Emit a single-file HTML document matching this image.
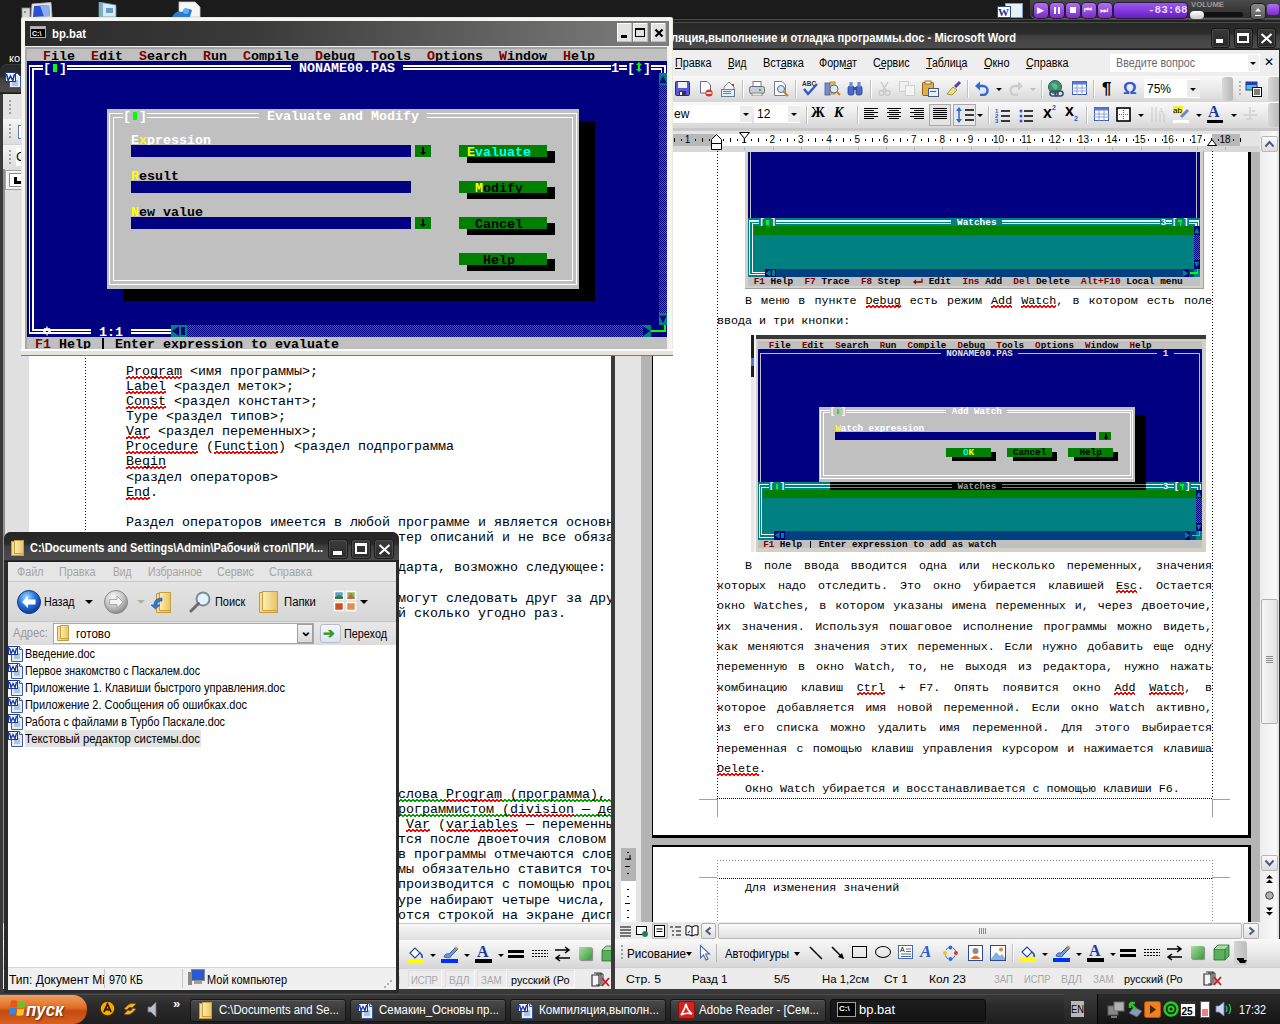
<!DOCTYPE html><html><head><meta charset="utf-8"><style>*{margin:0;padding:0}html,body{width:1280px;height:1024px;overflow:hidden;background:#1b1b1b}
div{position:absolute}
.w,.g{background-repeat:repeat-x;background-size:4px 3px;background-position:0 100%}
.w{background-image:linear-gradient(135deg,transparent 0 40%,#ff0000 40% 60%,transparent 60%),linear-gradient(45deg,transparent 0 40%,#ff0000 40% 60%,transparent 60%);background-size:4px 3px,4px 3px;background-position:0 100%,2px 100%}
.g{background-image:linear-gradient(135deg,transparent 0 40%,#00a000 40% 60%,transparent 60%),linear-gradient(45deg,transparent 0 40%,#00a000 40% 60%,transparent 60%);background-size:4px 3px,4px 3px;background-position:0 100%,2px 100%}
</style></head><body><div style="left:0px;top:0px;width:1280px;height:1024px;background:#1b1b1b;"></div>
<div style="left:9px;top:52px;color:#fff;font:normal 11px/13px 'Liberation Sans',sans-serif;white-space:pre;">ко</div>
<div style="left:0px;top:64px;width:640px;height:931px;background:#3a3a3a;border-radius:7px 7px 0 0"></div>
<div style="left:0px;top:65px;width:640px;height:29px;background:linear-gradient(#282828,#2b2b2b 38%,#3e3e3e 48%,#474747 70%,#4a4a4a 92%,#1e1e1e 96%);border-radius:7px 7px 0 0"></div>
<div style="left:5px;top:71px;width:17px;height:17px"><svg width="17" height="17" style="display:block"><path d="M4.5 2.5 H12.5 L15.5 5.5 V16.5 H4.5Z" fill="#e4eefa" stroke="#3a5aa8"/><path d="M7 10H13M7 12H13M7 14H13" stroke="#7a9ad0"/><rect x="0.5" y="1.5" width="10" height="9" fill="#fff" stroke="#1a3aa0"/><path d="M1.5 3 L3.2 9.5 L5.5 5 L7.8 9.5 L9.5 3" fill="none" stroke="#1a3aa0" stroke-width="1.6"/></svg></div>
<div style="left:3px;top:94px;width:637px;height:25px;background:#e4e4e4;"></div>
<div style="left:3px;top:119px;width:637px;height:25px;background:linear-gradient(#f6f6f6,#dcdcdc);"></div>
<div style="left:3px;top:144px;width:637px;height:25px;background:linear-gradient(#f6f6f6,#dcdcdc);"></div>
<div style="left:3px;top:144px;width:637px;height:1px;background:#d0d0d0;"></div>
<div style="left:9px;top:100px;width:2px;height:2px;background:#a0a0a0;"></div>
<div style="left:9px;top:104px;width:2px;height:2px;background:#a0a0a0;"></div>
<div style="left:9px;top:108px;width:2px;height:2px;background:#a0a0a0;"></div>
<div style="left:9px;top:112px;width:2px;height:2px;background:#a0a0a0;"></div>
<div style="left:9px;top:124px;width:2px;height:2px;background:#a0a0a0;"></div>
<div style="left:9px;top:128px;width:2px;height:2px;background:#a0a0a0;"></div>
<div style="left:9px;top:132px;width:2px;height:2px;background:#a0a0a0;"></div>
<div style="left:9px;top:136px;width:2px;height:2px;background:#a0a0a0;"></div>
<div style="left:9px;top:150px;width:2px;height:2px;background:#a0a0a0;"></div>
<div style="left:9px;top:154px;width:2px;height:2px;background:#a0a0a0;"></div>
<div style="left:9px;top:158px;width:2px;height:2px;background:#a0a0a0;"></div>
<div style="left:9px;top:162px;width:2px;height:2px;background:#a0a0a0;"></div>
<div style="left:18px;top:125px;width:6px;height:14px;background:#fff;border:1px solid #5a7ab0;box-sizing:border-box"></div>
<div style="left:16px;top:148px;width:14px;height:18px;background:#fff;"></div>
<div style="left:16px;top:149px;color:#000;font:normal 13px/16px 'Liberation Sans',sans-serif;white-space:pre;">С</div>
<div style="left:3px;top:169px;width:637px;height:186px;background:#dcdcdc;"></div>
<div style="left:3px;top:169px;width:2px;height:754px;background:#909090;"></div>
<div style="left:5px;top:169px;width:24px;height:754px;background:#e0e0e0;"></div>
<div style="left:5px;top:170px;width:20px;height:20px;background:#f0f0f0;border:1px solid #a0a0a0;box-sizing:border-box;box-shadow:inset 1px 1px #fff"></div>
<div style="left:9px;top:173px;width:14px;height:14px;background:#fff;border:1px solid #8a8a8a;box-sizing:border-box"></div>
<div style="left:14px;top:177px;width:3px;height:7px;background:#000;"></div>
<div style="left:14px;top:181px;width:7px;height:3px;background:#000;"></div>
<div style="left:29px;top:169px;width:582px;height:754px;background:#ffffff;"></div>
<div style="left:85px;top:355px;width:1px;height:568px;background:repeating-linear-gradient(#000 0 1px,transparent 1px 3px);"></div>
<div style="left:126px;top:363.5px;color:#000;font:normal 13.33px/15px 'Liberation Mono',monospace;white-space:pre"><span class="w">Program</span> &lt;имя программы&gt;;</div>
<div style="left:126px;top:378.65px;color:#000;font:normal 13.33px/15px 'Liberation Mono',monospace;white-space:pre"><span class="w">Label</span> &lt;раздел меток&gt;;</div>
<div style="left:126px;top:393.8px;color:#000;font:normal 13.33px/15px 'Liberation Mono',monospace;white-space:pre"><span class="w">Const</span> &lt;раздел констант&gt;;</div>
<div style="left:126px;top:408.95px;color:#000;font:normal 13.33px/15px 'Liberation Mono',monospace;white-space:pre">Type &lt;раздел типов&gt;;</div>
<div style="left:126px;top:424.1px;color:#000;font:normal 13.33px/15px 'Liberation Mono',monospace;white-space:pre"><span class="w">Var</span> &lt;раздел переменных&gt;;</div>
<div style="left:126px;top:439.25px;color:#000;font:normal 13.33px/15px 'Liberation Mono',monospace;white-space:pre"><span class="w">Procedure</span> (<span class="w">Function</span>) &lt;раздел подпрограмма</div>
<div style="left:126px;top:454.4px;color:#000;font:normal 13.33px/15px 'Liberation Mono',monospace;white-space:pre"><span class="w">Begin</span></div>
<div style="left:126px;top:469.55px;color:#000;font:normal 13.33px/15px 'Liberation Mono',monospace;white-space:pre">&lt;раздел операторов&gt;</div>
<div style="left:126px;top:484.7px;color:#000;font:normal 13.33px/15px 'Liberation Mono',monospace;white-space:pre"><span class="w">End</span>.</div>
<div style="left:126px;top:515.0px;color:#000;font:normal 13.33px/15px 'Liberation Mono',monospace;white-space:pre">Раздел операторов имеется в любой программе и является основным</div>
<div style="left:398px;top:530.15px;color:#000;font:normal 13.33px/15px 'Liberation Mono',monospace;white-space:pre">тер описаний и не все обязательны</div>
<div style="left:398px;top:560.45px;color:#000;font:normal 13.33px/15px 'Liberation Mono',monospace;white-space:pre">дарта, возможно следующее:</div>
<div style="left:398px;top:590.75px;color:#000;font:normal 13.33px/15px 'Liberation Mono',monospace;white-space:pre">могут следовать друг за другом</div>
<div style="left:398px;top:605.9px;color:#000;font:normal 13.33px/15px 'Liberation Mono',monospace;white-space:pre">й сколько угодно раз.</div>
<div style="left:398px;top:786.5px;color:#000;font:normal 13.33px/15px 'Liberation Mono',monospace;white-space:pre"><span class="g">слова <span class="w">Program</span> (программа), </span></div>
<div style="left:398px;top:801.65px;color:#000;font:normal 13.33px/15px 'Liberation Mono',monospace;white-space:pre"><span class="g">рограммистом (<span class="w">division</span> — деление)</span></div>
<div style="left:398px;top:816.8px;color:#000;font:normal 13.33px/15px 'Liberation Mono',monospace;white-space:pre"> <span class="w">Var</span> (<span class="w">variables</span> — переменные)</div>
<div style="left:398px;top:831.95px;color:#000;font:normal 13.33px/15px 'Liberation Mono',monospace;white-space:pre">тся после двоеточия словом </div>
<div style="left:398px;top:847.1px;color:#000;font:normal 13.33px/15px 'Liberation Mono',monospace;white-space:pre">в программы отмечаются слова</div>
<div style="left:398px;top:862.25px;color:#000;font:normal 13.33px/15px 'Liberation Mono',monospace;white-space:pre">мы обязательно ставится точка</div>
<div style="left:398px;top:877.4px;color:#000;font:normal 13.33px/15px 'Liberation Mono',monospace;white-space:pre">производится с помощью процедур</div>
<div style="left:398px;top:892.55px;color:#000;font:normal 13.33px/15px 'Liberation Mono',monospace;white-space:pre">уре набирают четыре числа, </div>
<div style="left:398px;top:907.7px;color:#000;font:normal 13.33px/15px 'Liberation Mono',monospace;white-space:pre">отся строкой на экране дисплея</div>
<div style="left:3px;top:923px;width:637px;height:17px;background:linear-gradient(#fafafa,#e0e0e0);"></div>
<div style="left:3px;top:923px;width:637px;height:1px;background:#c8c8c8;"></div>
<div style="left:3px;top:940px;width:637px;height:28px;background:linear-gradient(#f9f9f9,#e6e6e6 60%,#d6d6d6);"></div>
<div style="left:407px;top:945px;width:17px;height:19px"><svg width="17" height="19" style="display:block"><path d="M3 8 L8 3 L13 8 L8 13Z" fill="#fff" stroke="#2a4aa0" stroke-width="1.2"/><path d="M13 8 Q16 10 15 13" fill="none" stroke="#2a4aa0" stroke-width="1.5"/><rect x="0" y="14" width="17" height="4" fill="#ffff00"/></svg></div>
<div style="left:441px;top:945px;width:18px;height:19px"><svg width="18" height="19" style="display:block"><path d="M3 12 Q4 8 8 9 L15 2 L17 4 L10 11 Q10 14 3 12Z" fill="#6a9ad8" stroke="#2a4aa0" stroke-width=".8"/><path d="M14 2 L17 4" stroke="#d0a030" stroke-width="2"/><rect x="0" y="14" width="17" height="4" fill="#0030ff"/></svg></div>
<div style="left:477px;top:943px;color:#1a3a9a;font:bold 16px/18px 'Liberation Serif',serif;white-space:pre;">A</div>
<div style="left:475px;top:959px;width:17px;height:4px;background:#000;"></div>
<div style="left:430px;top:954px;width:0px;height:0px;background:transparent;border-left:3px solid transparent;border-right:3px solid transparent;border-top:3px solid #000"></div>
<div style="left:464px;top:954px;width:0px;height:0px;background:transparent;border-left:3px solid transparent;border-right:3px solid transparent;border-top:3px solid #000"></div>
<div style="left:498px;top:954px;width:0px;height:0px;background:transparent;border-left:3px solid transparent;border-right:3px solid transparent;border-top:3px solid #000"></div>
<div style="left:508px;top:950px;width:16px;height:2.5px;background:#000;"></div>
<div style="left:508px;top:955px;width:16px;height:3px;background:#000;"></div>
<div style="left:532px;top:950px;width:16px;height:1px;background:repeating-linear-gradient(90deg,#000 0 2px,transparent 2px 3px);"></div>
<div style="left:532px;top:953px;width:16px;height:1px;background:repeating-linear-gradient(90deg,#000 0 2px,transparent 2px 3px);"></div>
<div style="left:532px;top:956px;width:16px;height:1px;background:repeating-linear-gradient(90deg,#000 0 2px,transparent 2px 3px);"></div>
<div style="left:554px;top:946px;width:17px;height:16px"><svg width="17" height="16" style="display:block"><path d="M1 4H15 M11 1 L15 4 L11 7 M16 12H2 M6 9 L2 12 L6 15" fill="none" stroke="#000" stroke-width="1.5"/></svg></div>
<div style="left:579px;top:947px;width:13px;height:13px;background:linear-gradient(135deg,#a8dca8,#3a9a3a);box-shadow:1px 1px 1px #888;border-radius:1px"></div>
<div style="left:601px;top:945px;width:17px;height:17px"><svg width="17" height="17" style="display:block"><path d="M1 5 L5 1 H16 V12 L12 16 H1Z" fill="#5ab05a" stroke="#2a6a2a" stroke-width=".8"/><path d="M1 5 H12 V16 M12 5 L16 1" fill="none" stroke="#2a6a2a" stroke-width=".8"/><path d="M1.5 5 L5 1.5 H15.5 L12 5Z" fill="#a8dca8"/></svg></div>
<div style="left:3px;top:968px;width:637px;height:21px;background:#ececec;"></div>
<div style="left:3px;top:968px;width:637px;height:1px;background:#d4d4d4;"></div>
<div style="left:381px;top:973px;color:#a8a8a8;font:normal 11.5px/14px 'Liberation Sans',sans-serif;white-space:pre;transform-origin:0 0;transform:scaleX(0.8346);">ЗАП</div>
<div style="left:411px;top:973px;color:#a8a8a8;font:normal 11.5px/14px 'Liberation Sans',sans-serif;white-space:pre;transform-origin:0 0;transform:scaleX(0.8304);">ИСПР</div>
<div style="left:448.5px;top:973px;color:#a8a8a8;font:normal 11.5px/14px 'Liberation Sans',sans-serif;white-space:pre;transform-origin:0 0;transform:scaleX(0.9005);">ВДЛ</div>
<div style="left:480.5px;top:973px;color:#a8a8a8;font:normal 11.5px/14px 'Liberation Sans',sans-serif;white-space:pre;transform-origin:0 0;transform:scaleX(0.8470);">ЗАМ</div>
<div style="left:511px;top:973px;color:#000;font:normal 11.5px/14px 'Liberation Sans',sans-serif;white-space:pre;transform-origin:0 0;transform:scaleX(0.9457);">русский (Ро</div>
<div style="left:408px;top:970px;width:34px;height:18px;background:transparent;box-shadow:inset -1px -1px #f8f8f8,inset 1px 1px #e0e0e0"></div>
<div style="left:445px;top:970px;width:30px;height:18px;background:transparent;box-shadow:inset -1px -1px #f8f8f8,inset 1px 1px #e0e0e0"></div>
<div style="left:477px;top:970px;width:30px;height:18px;background:transparent;box-shadow:inset -1px -1px #f8f8f8,inset 1px 1px #e0e0e0"></div>
<div style="left:507px;top:970px;width:68px;height:18px;background:transparent;box-shadow:inset -1px -1px #f8f8f8,inset 1px 1px #e0e0e0"></div>
<div style="left:591px;top:972px;width:19px;height:16px"><svg width="19" height="16" style="display:block"><path d="M1 3 H8 V14 H1Z M3 1 H10 V12" fill="#f4f4f4" stroke="#333" stroke-width="1.2"/><path d="M5 2 H12 V13 H5" fill="none" stroke="#333" stroke-width="1"/><path d="M11 6 L18 14 M18 6 L11 14" stroke="#c02020" stroke-width="1.8"/></svg></div>
<div style="left:0px;top:989px;width:640px;height:6px;background:#3a3a3a;"></div>
<div style="left:611px;top:19px;width:669px;height:976px;background:#3a3a3a;border-radius:7px 7px 0 0"></div>
<div style="left:611px;top:19px;width:669px;height:4px;background:#222;border-radius:7px 7px 0 0"></div>
<div style="left:611px;top:19px;width:669px;height:1px;background:#4a4a4a;"></div>
<div style="left:611px;top:22px;width:669px;height:1px;background:#4a4a4a;"></div>
<div style="left:611px;top:23px;width:669px;height:27px;background:linear-gradient(#282828,#2b2b2b 38%,#3e3e3e 48%,#474747 70%,#4a4a4a 92%,#1e1e1e 96%);"></div>
<div style="left:671px;top:30px;color:#fff;font:bold 13px/16px 'Liberation Sans',sans-serif;white-space:pre;transform-origin:0 0;transform:scaleX(0.8579);">ляция,выполнение и отладка программы.doc - Microsoft Word</div>
<div style="left:1211px;top:28px;width:19px;height:20px;background:linear-gradient(#383838,#282828);border:1px solid #181818;border-radius:3px;box-sizing:border-box;box-shadow:inset 0 0 0 1px #484848"></div>
<div style="left:1234px;top:28px;width:19px;height:20px;background:linear-gradient(#383838,#282828);border:1px solid #181818;border-radius:3px;box-sizing:border-box;box-shadow:inset 0 0 0 1px #484848"></div>
<div style="left:1257px;top:28px;width:19px;height:20px;background:linear-gradient(#383838,#282828);border:1px solid #181818;border-radius:3px;box-sizing:border-box;box-shadow:inset 0 0 0 1px #484848"></div>
<div style="left:1216px;top:39px;width:7px;height:4px;background:#fff;"></div>
<div style="left:1237px;top:33px;width:12px;height:10px;background:transparent;border:2px solid #fff;border-top-width:3px;box-sizing:border-box"></div>
<div style="left:1260px;top:33px;width:13px;height:11px"><svg width="13" height="11" style="display:block"><path d="M1.5 1 L11.5 10 M11.5 1 L1.5 10" stroke="#fff" stroke-width="2"/></svg></div>
<div style="left:615px;top:50px;width:665px;height:26px;background:#eeeeee;"></div>
<div style="left:675px;top:56px;color:#000;font:normal 12px/14px 'Liberation Sans',sans-serif;white-space:pre;transform-origin:0 0;transform:scaleX(0.9027);">Правка</div>
<div style="left:727.6px;top:56px;color:#000;font:normal 12px/14px 'Liberation Sans',sans-serif;white-space:pre;transform-origin:0 0;transform:scaleX(0.8472);">Вид</div>
<div style="left:762.8px;top:56px;color:#000;font:normal 12px/14px 'Liberation Sans',sans-serif;white-space:pre;transform-origin:0 0;transform:scaleX(0.9146);">Вставка</div>
<div style="left:819px;top:56px;color:#000;font:normal 12px/14px 'Liberation Sans',sans-serif;white-space:pre;transform-origin:0 0;transform:scaleX(0.8912);">Формат</div>
<div style="left:873px;top:56px;color:#000;font:normal 12px/14px 'Liberation Sans',sans-serif;white-space:pre;transform-origin:0 0;transform:scaleX(0.8906);">Сервис</div>
<div style="left:926px;top:56px;color:#000;font:normal 12px/14px 'Liberation Sans',sans-serif;white-space:pre;transform-origin:0 0;transform:scaleX(0.8818);">Таблица</div>
<div style="left:983.5px;top:56px;color:#000;font:normal 12px/14px 'Liberation Sans',sans-serif;white-space:pre;transform-origin:0 0;transform:scaleX(0.9143);">Окно</div>
<div style="left:1025.8px;top:56px;color:#000;font:normal 12px/14px 'Liberation Sans',sans-serif;white-space:pre;transform-origin:0 0;transform:scaleX(0.9028);">Справка</div>
<div style="left:675.0px;top:68px;width:6.1px;height:1px;background:#000;"></div>
<div style="left:727.6px;top:68px;width:6.1px;height:1px;background:#000;"></div>
<div style="left:780.3px;top:68px;width:5.8px;height:1px;background:#000;"></div>
<div style="left:844.3px;top:68px;width:6.3px;height:1px;background:#000;"></div>
<div style="left:879.1px;top:68px;width:6.1px;height:1px;background:#000;"></div>
<div style="left:926.0px;top:68px;width:5.9px;height:1px;background:#000;"></div>
<div style="left:983.5px;top:68px;width:6.4px;height:1px;background:#000;"></div>
<div style="left:1025.8px;top:68px;width:6.1px;height:1px;background:#000;"></div>
<div style="left:1110px;top:54px;width:150px;height:18px;background:#fff;"></div>
<div style="left:1248px;top:55px;width:11px;height:16px;background:#f0f0f0;"></div>
<div style="left:1116px;top:56px;color:#6a6a6a;font:normal 12px/14px 'Liberation Sans',sans-serif;white-space:pre;transform-origin:0 0;transform:scaleX(0.8927);">Введите вопрос</div>
<div style="left:1250px;top:62px;width:0px;height:0px;background:transparent;border-left:3px solid transparent;border-right:3px solid transparent;border-top:3px solid #000"></div>
<div style="left:1264px;top:54px;color:#000;font:normal 12px/16px 'Liberation Sans',sans-serif;white-space:pre;">✕</div>
<div style="left:615px;top:76px;width:665px;height:26px;background:linear-gradient(#f9f9f9,#e6e6e6 60%,#d6d6d6);"></div>
<div style="left:615px;top:102px;width:665px;height:26px;background:linear-gradient(#f9f9f9,#e6e6e6 60%,#d6d6d6);"></div>
<div style="left:615px;top:128px;width:665px;height:3px;background:#c8c8c8;"></div>
<div style="left:675px;top:81px;width:15px;height:15px"><svg width="15" height="15" style="display:block"><rect x="0.5" y="0.5" width="14" height="14" rx="1" fill="#5a5ad8" stroke="#2a2a8a"/><rect x="3" y="1" width="9" height="6" fill="#f0f0ff"/><rect x="4" y="10" width="7" height="5" fill="#303050"/><rect x="5" y="11" width="2" height="3" fill="#fff"/></svg></div>
<div style="left:699px;top:81px;width:14px;height:16px"><svg width="14" height="16" style="display:block"><path d="M1.5 0.5H8L11.5 4V12H1.5Z" fill="#fff" stroke="#6a6a8a"/><circle cx="10" cy="12" r="3.6" fill="#e03020"/><rect x="7.5" y="11.2" width="5" height="1.6" fill="#fff"/></svg></div>
<div style="left:720px;top:81px;width:17px;height:16px"><svg width="17" height="16" style="display:block"><path d="M4 6 L9 1 L14 6 V10 H4Z" fill="#f4f4f8" stroke="#7a8aa0"/><rect x="1.5" y="8.5" width="13" height="7" fill="#e8eef8" stroke="#6a7a90"/><rect x="3" y="10" width="8" height="1" fill="#6a7a90"/><rect x="3" y="12" width="8" height="1" fill="#6a7a90"/><rect x="12" y="3" width="2" height="2" fill="#e03020"/></svg></div>
<div style="left:749px;top:81px;width:16px;height:15px"><svg width="16" height="15" style="display:block"><rect x="4" y="0.5" width="8" height="5" fill="#fff" stroke="#7a7a7a"/><rect x="0.5" y="5.5" width="15" height="7" rx="2" fill="#c8ccd4" stroke="#6a6e78"/><rect x="3" y="12" width="10" height="3" fill="#e8e8e8" stroke="#7a7a7a" stroke-width=".8"/><rect x="10" y="8" width="2" height="2" fill="#20c020"/></svg></div>
<div style="left:773px;top:81px;width:16px;height:16px"><svg width="16" height="16" style="display:block"><path d="M1.5 0.5H9L12.5 4V14.5H1.5Z" fill="#fff" stroke="#7a7a9a"/><circle cx="8" cy="8" r="3.5" fill="#cfe4f8" stroke="#5a6a80"/><path d="M10.5 10.5L15 15" stroke="#d08020" stroke-width="2.2"/></svg></div>
<div style="left:801px;top:80px;width:17px;height:16px"><svg width="17" height="16" style="display:block"><text x="1" y="6" font-family="Liberation Sans" font-weight="bold" font-size="6.5" fill="#303030">ABC</text><path d="M3 9 L7 14 L16 4" fill="none" stroke="#2a5ad8" stroke-width="2.4"/></svg></div>
<div style="left:824px;top:80px;width:17px;height:17px"><svg width="17" height="17" style="display:block"><rect x="1" y="3" width="5" height="12" fill="#7a8ad8" stroke="#4a5aa0" stroke-width=".8"/><rect x="6" y="2" width="5" height="12" fill="#e0c060" stroke="#a08030" stroke-width=".8"/><circle cx="10" cy="9" r="4" fill="#d8ecfa" stroke="#5a6a7a"/><path d="M12.5 11.5L16 15" stroke="#d08020" stroke-width="2"/></svg></div>
<div style="left:847px;top:81px;width:16px;height:15px"><svg width="16" height="15" style="display:block"><rect x="1" y="5" width="6" height="9" rx="2" fill="#4a6ac8" stroke="#2a3a88" stroke-width=".8"/><rect x="9" y="5" width="6" height="9" rx="2" fill="#4a6ac8" stroke="#2a3a88" stroke-width=".8"/><rect x="2.5" y="1" width="3" height="5" fill="#6a8ad8"/><rect x="10.5" y="1" width="3" height="5" fill="#6a8ad8"/><rect x="6" y="6" width="4" height="3" fill="#3a4a98"/></svg></div>
<div style="left:878px;top:81px;width:13px;height:15px"><svg width="13" height="15" style="display:block"><circle cx="3.5" cy="12" r="2.5" fill="none" stroke="#c8c8c8" stroke-width="1.3"/><circle cx="9.5" cy="12" r="2.5" fill="none" stroke="#c8c8c8" stroke-width="1.3"/><path d="M4.5 10 L10 1 M8.5 10 L3 1" stroke="#c4c4c4" stroke-width="1.3"/></svg></div>
<div style="left:899px;top:81px;width:16px;height:15px"><svg width="16" height="15" style="display:block"><rect x="0.5" y="0.5" width="9" height="10" fill="#f0f0f0" stroke="#cfcfcf"/><rect x="6.5" y="4.5" width="9" height="10" fill="#f4f4f4" stroke="#cfcfcf"/></svg></div>
<div style="left:922px;top:80px;width:17px;height:17px"><svg width="17" height="17" style="display:block"><rect x="0.5" y="2.5" width="11" height="13" rx="1" fill="#e0b040" stroke="#906010"/><rect x="3" y="1" width="6" height="3" fill="#f8f0d0" stroke="#806020" stroke-width=".8"/><rect x="6.5" y="8.5" width="10" height="8" fill="#e8eef8" stroke="#4a5a80"/><rect x="8" y="11" width="6" height="1" fill="#4a5a80"/></svg></div>
<div style="left:945px;top:80px;width:17px;height:16px"><svg width="17" height="16" style="display:block"><path d="M2 14 L8 7 L12 10 L7 15Z" fill="#f0e080" stroke="#8a7a20" stroke-width=".8"/><path d="M10 7 L15 2" stroke="#5a3ab0" stroke-width="3"/></svg></div>
<div style="left:975px;top:81px;width:14px;height:15px"><svg width="14" height="15" style="display:block"><path d="M4 5 H8 A4.5 4.5 0 0 1 8 14 H5" fill="none" stroke="#2a6ad8" stroke-width="2.4"/><path d="M0 5 L5 0.5 V9.5Z" fill="#2a6ad8"/></svg></div>
<div style="left:1009px;top:81px;width:14px;height:15px"><svg width="14" height="15" style="display:block"><path d="M10 5 H6 A4.5 4.5 0 0 0 6 14 H9" fill="none" stroke="#cccccc" stroke-width="2.4"/><path d="M14 5 L9 0.5 V9.5Z" fill="#cccccc"/></svg></div>
<div style="left:1047px;top:80px;width:18px;height:17px"><svg width="18" height="17" style="display:block"><circle cx="8" cy="7" r="6.5" fill="#3a9a4a" stroke="#2a5a8a"/><path d="M4 4 Q8 2 10 5 Q12 8 8 10" fill="#6ac0e0" opacity=".7"/><rect x="3" y="11" width="8" height="5" rx="2.5" fill="none" stroke="#3a4a7a" stroke-width="1.6"/><rect x="8" y="11" width="8" height="5" rx="2.5" fill="none" stroke="#3a4a7a" stroke-width="1.6"/></svg></div>
<div style="left:1072px;top:81px;width:15px;height:14px"><svg width="15" height="14" style="display:block"><rect x="0.5" y="0.5" width="14" height="13" fill="#fff" stroke="#3a5ab8"/><rect x="0.5" y="0.5" width="14" height="3" fill="#5a7ad8"/><path d="M0 7H15M0 10H15M5 3V14M10 3V14" stroke="#8aa0d8"/></svg></div>
<div style="left:1102px;top:80px;color:#000;font:bold 17px/18px 'Liberation Sans',sans-serif;white-space:pre;">¶</div>
<div style="left:1123px;top:79px;color:#2a5ad0;font:bold 17px/19px 'Liberation Sans',sans-serif;white-space:pre;">Ω</div>
<div style="left:742px;top:80px;width:1px;height:18px;background:#c0c0c0;"></div>
<div style="left:743px;top:80px;width:1px;height:18px;background:#fff;"></div>
<div style="left:795px;top:80px;width:1px;height:18px;background:#c0c0c0;"></div>
<div style="left:796px;top:80px;width:1px;height:18px;background:#fff;"></div>
<div style="left:870px;top:80px;width:1px;height:18px;background:#c0c0c0;"></div>
<div style="left:871px;top:80px;width:1px;height:18px;background:#fff;"></div>
<div style="left:967px;top:80px;width:1px;height:18px;background:#c0c0c0;"></div>
<div style="left:968px;top:80px;width:1px;height:18px;background:#fff;"></div>
<div style="left:1041px;top:80px;width:1px;height:18px;background:#c0c0c0;"></div>
<div style="left:1042px;top:80px;width:1px;height:18px;background:#fff;"></div>
<div style="left:1093px;top:80px;width:1px;height:18px;background:#c0c0c0;"></div>
<div style="left:1094px;top:80px;width:1px;height:18px;background:#fff;"></div>
<div style="left:1144px;top:79px;width:56px;height:19px;background:#fff;"></div>
<div style="left:1147px;top:82px;color:#000;font:normal 12px/14px 'Liberation Sans',sans-serif;white-space:pre;">75%</div>
<div style="left:1187px;top:80px;width:13px;height:17px;background:#ececec;"></div>
<div style="left:996px;top:88px;width:0px;height:0px;background:transparent;border-left:3px solid transparent;border-right:3px solid transparent;border-top:3px solid #000"></div>
<div style="left:1030px;top:88px;width:0px;height:0px;background:transparent;border-left:3px solid transparent;border-right:3px solid transparent;border-top:3px solid #c0c0c0"></div>
<div style="left:1190px;top:88px;width:0px;height:0px;background:transparent;border-left:3px solid transparent;border-right:3px solid transparent;border-top:3px solid #000"></div>
<div style="left:1222px;top:77px;width:11px;height:24px;background:linear-gradient(90deg,#d8d8d8,#b8b8b8);border-radius:3px"></div>
<div style="left:1236px;top:77px;width:44px;height:24px;background:linear-gradient(#f6f6f6,#e0e0e0);border-radius:4px 0 0 4px"></div>
<div style="left:1239px;top:81px;width:2px;height:2px;background:#b0b0b0;"></div>
<div style="left:1239px;top:85px;width:2px;height:2px;background:#b0b0b0;"></div>
<div style="left:1239px;top:89px;width:2px;height:2px;background:#b0b0b0;"></div>
<div style="left:1239px;top:93px;width:2px;height:2px;background:#b0b0b0;"></div>
<div style="left:1245px;top:81px;width:18px;height:16px"><svg width="18" height="16" style="display:block"><rect x="1" y="1" width="11" height="8" fill="#40c8e0" stroke="#2a3a8a"/><rect x="1" y="1" width="11" height="3" fill="#2a3ab0"/><rect x="7.5" y="6.5" width="9" height="9" fill="#fff" stroke="#000"/><path d="M9 9H15M9 11H15M9 13H15" stroke="#000"/></svg></div>
<div style="left:1268px;top:77px;width:12px;height:24px;background:linear-gradient(90deg,#d8d8d8,#b8b8b8);border-radius:3px 0 0 3px"></div>
<div style="left:672px;top:105px;width:80px;height:18px;background:#fff;"></div>
<div style="left:674px;top:107px;color:#000;font:normal 12px/14px 'Liberation Sans',sans-serif;white-space:pre;">ew</div>
<div style="left:740px;top:106px;width:12px;height:16px;background:#ececec;"></div>
<div style="left:754px;top:105px;width:46px;height:18px;background:#fff;"></div>
<div style="left:757px;top:107px;color:#000;font:normal 12px/14px 'Liberation Sans',sans-serif;white-space:pre;">12</div>
<div style="left:788px;top:106px;width:12px;height:16px;background:#ececec;"></div>
<div style="left:743px;top:113px;width:0px;height:0px;background:transparent;border-left:3px solid transparent;border-right:3px solid transparent;border-top:3px solid #000"></div>
<div style="left:791px;top:113px;width:0px;height:0px;background:transparent;border-left:3px solid transparent;border-right:3px solid transparent;border-top:3px solid #000"></div>
<div style="left:811px;top:105px;color:#000;font:bold 14px/16px 'Liberation Serif',serif;white-space:pre;">Ж</div>
<div style="left:834px;top:105px;color:#000;font:bold 14px/16px 'Liberation Serif',serif;white-space:pre;font-style:italic">К</div>
<div style="left:929px;top:104px;width:22px;height:22px;background:#e4e4e4;box-shadow:inset 0 0 0 1px #a8a8a8"></div>
<div style="left:953px;top:104px;width:23px;height:22px;background:#e8e8e8;box-shadow:inset 0 0 0 1px #a8a8a8"></div>
<div style="left:864px;top:108px;width:14px;height:1px;background:#000;"></div>
<div style="left:864px;top:110px;width:10px;height:1px;background:#000;"></div>
<div style="left:864px;top:112px;width:14px;height:1px;background:#000;"></div>
<div style="left:864px;top:114px;width:10px;height:1px;background:#000;"></div>
<div style="left:864px;top:116px;width:14px;height:1px;background:#000;"></div>
<div style="left:864px;top:118px;width:10px;height:1px;background:#000;"></div>
<div style="left:887px;top:108px;width:14px;height:1px;background:#000;"></div>
<div style="left:889px;top:110px;width:10px;height:1px;background:#000;"></div>
<div style="left:887px;top:112px;width:14px;height:1px;background:#000;"></div>
<div style="left:889px;top:114px;width:10px;height:1px;background:#000;"></div>
<div style="left:887px;top:116px;width:14px;height:1px;background:#000;"></div>
<div style="left:889px;top:118px;width:10px;height:1px;background:#000;"></div>
<div style="left:910px;top:108px;width:14px;height:1px;background:#000;"></div>
<div style="left:914px;top:110px;width:10px;height:1px;background:#000;"></div>
<div style="left:910px;top:112px;width:14px;height:1px;background:#000;"></div>
<div style="left:914px;top:114px;width:10px;height:1px;background:#000;"></div>
<div style="left:910px;top:116px;width:14px;height:1px;background:#000;"></div>
<div style="left:914px;top:118px;width:10px;height:1px;background:#000;"></div>
<div style="left:933px;top:108px;width:14px;height:1px;background:#000;"></div>
<div style="left:933px;top:110px;width:14px;height:1px;background:#000;"></div>
<div style="left:933px;top:112px;width:14px;height:1px;background:#000;"></div>
<div style="left:933px;top:114px;width:14px;height:1px;background:#000;"></div>
<div style="left:933px;top:116px;width:14px;height:1px;background:#000;"></div>
<div style="left:933px;top:118px;width:14px;height:1px;background:#000;"></div>
<div style="left:955px;top:106px;width:20px;height:18px"><svg width="20" height="18" style="display:block"><path d="M4 1 L7 5 H1Z M4 17 L7 13 H1Z" fill="#2a6ad8"/><path d="M4 4V14" stroke="#2a6ad8" stroke-width="1.5"/><path d="M10 4H19M10 9H19M10 14H19" stroke="#000" stroke-width="1.6"/></svg></div>
<div style="left:977px;top:114px;width:0px;height:0px;background:transparent;border-left:3px solid transparent;border-right:3px solid transparent;border-top:3px solid #000"></div>
<div style="left:995px;top:107px;width:16px;height:16px"><svg width="16" height="16" style="display:block"><text x="0" y="6" font-family="Liberation Sans" font-weight="bold" font-size="6" fill="#2a5ad0">1</text><text x="0" y="11" font-family="Liberation Sans" font-weight="bold" font-size="6" fill="#2a5ad0">2</text><text x="0" y="16" font-family="Liberation Sans" font-weight="bold" font-size="6" fill="#2a5ad0">3</text><path d="M6 4H15M6 9H15M6 14H15" stroke="#000" stroke-width="1.5"/></svg></div>
<div style="left:1019px;top:107px;width:14px;height:16px"><svg width="14" height="16" style="display:block"><circle cx="2" cy="4" r="1.5" fill="#2a5ad0"/><circle cx="2" cy="9" r="1.5" fill="#2a5ad0"/><circle cx="2" cy="14" r="1.5" fill="#2a5ad0"/><path d="M5 4H14M5 9H14M5 14H14" stroke="#000" stroke-width="1.5"/></svg></div>
<div style="left:1043px;top:104px;color:#000;font:bold 16px/18px 'Liberation Sans',sans-serif;white-space:pre;">x</div>
<div style="left:1052px;top:103px;color:#2a5ad0;font:bold 7px/9px 'Liberation Sans',sans-serif;white-space:pre;">2</div>
<div style="left:1065px;top:102px;color:#000;font:bold 16px/18px 'Liberation Sans',sans-serif;white-space:pre;">x</div>
<div style="left:1074px;top:114px;color:#2a5ad0;font:bold 7px/9px 'Liberation Sans',sans-serif;white-space:pre;">2</div>
<div style="left:1094px;top:107px;width:15px;height:14px"><svg width="15" height="14" style="display:block"><rect x="0.5" y="0.5" width="14" height="13" fill="#fff" stroke="#3a5ab8"/><rect x="0.5" y="0.5" width="14" height="3" fill="#5a7ad8"/><path d="M0 7H15M0 10H15M5 3V14M10 3V14" stroke="#8aa0d8"/></svg></div>
<div style="left:1116px;top:107px;width:15px;height:15px"><svg width="15" height="15" style="display:block"><rect x="1" y="1" width="13" height="13" fill="#fff" stroke="#000" stroke-width="1.6"/><path d="M7.5 3V12M3 7.5H12" stroke="#6a6a6a" stroke-dasharray="1 1"/></svg></div>
<div style="left:1138px;top:114px;width:0px;height:0px;background:transparent;border-left:3px solid transparent;border-right:3px solid transparent;border-top:3px solid #000"></div>
<div style="left:1150px;top:106px;width:16px;height:17px"><svg width="16" height="17" style="display:block"><path d="M2 1V16M6 1V16M10 8V16M14 8V16" stroke="#c8c8c8"/><text x="8" y="8" font-family="Liberation Serif" font-size="8" fill="#c8c8c8">A</text></svg></div>
<div style="left:1173px;top:106px;width:18px;height:18px"><svg width="18" height="18" style="display:block"><rect x="0" y="0" width="10" height="8" fill="#f0f040"/><text x="0" y="7" font-family="Liberation Sans" font-size="8" fill="#000">ab</text><path d="M8 11 L15 4" stroke="#6a8ad0" stroke-width="3"/><rect x="0" y="14" width="16" height="3" fill="#fff"/></svg></div>
<div style="left:1196px;top:114px;width:0px;height:0px;background:transparent;border-left:3px solid transparent;border-right:3px solid transparent;border-top:3px solid #000"></div>
<div style="left:1208px;top:103px;color:#1a3a9a;font:bold 16px/18px 'Liberation Serif',serif;white-space:pre;">A</div>
<div style="left:1207px;top:120px;width:16px;height:3px;background:#000;"></div>
<div style="left:1231px;top:114px;width:0px;height:0px;background:transparent;border-left:3px solid transparent;border-right:3px solid transparent;border-top:3px solid #000"></div>
<div style="left:1242px;top:106px;width:16px;height:16px"><svg width="16" height="16" style="display:block"><path d="M8 1V13M1 9H15M4 13H10M10 5H13" stroke="#d0d0d0" stroke-width="1.5"/></svg></div>
<div style="left:1268px;top:103px;width:12px;height:24px;background:linear-gradient(90deg,#d8d8d8,#b8b8b8);border-radius:3px 0 0 3px"></div>
<div style="left:806px;top:106px;width:1px;height:18px;background:#c0c0c0;"></div>
<div style="left:807px;top:106px;width:1px;height:18px;background:#fff;"></div>
<div style="left:857px;top:106px;width:1px;height:18px;background:#c0c0c0;"></div>
<div style="left:858px;top:106px;width:1px;height:18px;background:#fff;"></div>
<div style="left:988px;top:106px;width:1px;height:18px;background:#c0c0c0;"></div>
<div style="left:989px;top:106px;width:1px;height:18px;background:#fff;"></div>
<div style="left:1086px;top:106px;width:1px;height:18px;background:#c0c0c0;"></div>
<div style="left:1087px;top:106px;width:1px;height:18px;background:#fff;"></div>
<div style="left:615px;top:131px;width:645px;height:20px;background:#e4e4e4;"></div>
<div style="left:672px;top:134px;width:568px;height:12px;background:#fff;"></div>
<div style="left:672px;top:134px;width:43px;height:12px;background:#b8b8b8;"></div>
<div style="left:1212px;top:134px;width:28px;height:12px;background:#b8b8b8;"></div>
<div style="left:672px;top:146px;width:588px;height:6px;background:#d8d8d8;"></div>
<div style="left:684.7px;top:134px;color:#000;font:normal 10px/12px 'Liberation Sans',sans-serif;white-space:pre;">1</div>
<div style="left:741.3px;top:134px;color:#000;font:normal 10px/12px 'Liberation Sans',sans-serif;white-space:pre;">1</div>
<div style="left:769.6px;top:134px;color:#000;font:normal 10px/12px 'Liberation Sans',sans-serif;white-space:pre;">2</div>
<div style="left:797.9px;top:134px;color:#000;font:normal 10px/12px 'Liberation Sans',sans-serif;white-space:pre;">3</div>
<div style="left:826.2px;top:134px;color:#000;font:normal 10px/12px 'Liberation Sans',sans-serif;white-space:pre;">4</div>
<div style="left:854.5px;top:134px;color:#000;font:normal 10px/12px 'Liberation Sans',sans-serif;white-space:pre;">5</div>
<div style="left:882.8px;top:134px;color:#000;font:normal 10px/12px 'Liberation Sans',sans-serif;white-space:pre;">6</div>
<div style="left:911.1px;top:134px;color:#000;font:normal 10px/12px 'Liberation Sans',sans-serif;white-space:pre;">7</div>
<div style="left:939.4px;top:134px;color:#000;font:normal 10px/12px 'Liberation Sans',sans-serif;white-space:pre;">8</div>
<div style="left:967.7px;top:134px;color:#000;font:normal 10px/12px 'Liberation Sans',sans-serif;white-space:pre;">9</div>
<div style="left:993.0px;top:134px;color:#000;font:normal 10px/12px 'Liberation Sans',sans-serif;white-space:pre;">10</div>
<div style="left:1021.3px;top:134px;color:#000;font:normal 10px/12px 'Liberation Sans',sans-serif;white-space:pre;">11</div>
<div style="left:1049.6px;top:134px;color:#000;font:normal 10px/12px 'Liberation Sans',sans-serif;white-space:pre;">12</div>
<div style="left:1077.9px;top:134px;color:#000;font:normal 10px/12px 'Liberation Sans',sans-serif;white-space:pre;">13</div>
<div style="left:1106.2px;top:134px;color:#000;font:normal 10px/12px 'Liberation Sans',sans-serif;white-space:pre;">14</div>
<div style="left:1134.5px;top:134px;color:#000;font:normal 10px/12px 'Liberation Sans',sans-serif;white-space:pre;">15</div>
<div style="left:1162.8px;top:134px;color:#000;font:normal 10px/12px 'Liberation Sans',sans-serif;white-space:pre;">16</div>
<div style="left:1191.1px;top:134px;color:#000;font:normal 10px/12px 'Liberation Sans',sans-serif;white-space:pre;">17</div>
<div style="left:1219.4px;top:134px;color:#000;font:normal 10px/12px 'Liberation Sans',sans-serif;white-space:pre;">18</div>
<div style="left:673.5px;top:138px;width:1px;height:4px;background:#000;"></div>
<div style="left:680.6px;top:139px;width:1px;height:2px;background:#000;"></div>
<div style="left:694.8px;top:139px;width:1px;height:2px;background:#000;"></div>
<div style="left:701.9px;top:138px;width:1px;height:4px;background:#000;"></div>
<div style="left:708.9px;top:139px;width:1px;height:2px;background:#000;"></div>
<div style="left:723.1px;top:139px;width:1px;height:2px;background:#000;"></div>
<div style="left:730.1px;top:138px;width:1px;height:4px;background:#000;"></div>
<div style="left:737.2px;top:139px;width:1px;height:2px;background:#000;"></div>
<div style="left:751.4px;top:139px;width:1px;height:2px;background:#000;"></div>
<div style="left:758.4px;top:138px;width:1px;height:4px;background:#000;"></div>
<div style="left:765.5px;top:139px;width:1px;height:2px;background:#000;"></div>
<div style="left:779.7px;top:139px;width:1px;height:2px;background:#000;"></div>
<div style="left:786.8px;top:138px;width:1px;height:4px;background:#000;"></div>
<div style="left:793.8px;top:139px;width:1px;height:2px;background:#000;"></div>
<div style="left:808.0px;top:139px;width:1px;height:2px;background:#000;"></div>
<div style="left:815.0px;top:138px;width:1px;height:4px;background:#000;"></div>
<div style="left:822.1px;top:139px;width:1px;height:2px;background:#000;"></div>
<div style="left:836.3px;top:139px;width:1px;height:2px;background:#000;"></div>
<div style="left:843.4px;top:138px;width:1px;height:4px;background:#000;"></div>
<div style="left:850.4px;top:139px;width:1px;height:2px;background:#000;"></div>
<div style="left:864.6px;top:139px;width:1px;height:2px;background:#000;"></div>
<div style="left:871.6px;top:138px;width:1px;height:4px;background:#000;"></div>
<div style="left:878.7px;top:139px;width:1px;height:2px;background:#000;"></div>
<div style="left:892.9px;top:139px;width:1px;height:2px;background:#000;"></div>
<div style="left:899.9px;top:138px;width:1px;height:4px;background:#000;"></div>
<div style="left:907.0px;top:139px;width:1px;height:2px;background:#000;"></div>
<div style="left:921.2px;top:139px;width:1px;height:2px;background:#000;"></div>
<div style="left:928.2px;top:138px;width:1px;height:4px;background:#000;"></div>
<div style="left:935.3px;top:139px;width:1px;height:2px;background:#000;"></div>
<div style="left:949.5px;top:139px;width:1px;height:2px;background:#000;"></div>
<div style="left:956.5px;top:138px;width:1px;height:4px;background:#000;"></div>
<div style="left:963.6px;top:139px;width:1px;height:2px;background:#000;"></div>
<div style="left:977.8px;top:139px;width:1px;height:2px;background:#000;"></div>
<div style="left:984.9px;top:138px;width:1px;height:4px;background:#000;"></div>
<div style="left:991.9px;top:139px;width:1px;height:2px;background:#000;"></div>
<div style="left:1006.1px;top:139px;width:1px;height:2px;background:#000;"></div>
<div style="left:1013.1px;top:138px;width:1px;height:4px;background:#000;"></div>
<div style="left:1020.2px;top:139px;width:1px;height:2px;background:#000;"></div>
<div style="left:1034.4px;top:139px;width:1px;height:2px;background:#000;"></div>
<div style="left:1041.5px;top:138px;width:1px;height:4px;background:#000;"></div>
<div style="left:1048.5px;top:139px;width:1px;height:2px;background:#000;"></div>
<div style="left:1062.7px;top:139px;width:1px;height:2px;background:#000;"></div>
<div style="left:1069.8px;top:138px;width:1px;height:4px;background:#000;"></div>
<div style="left:1076.8px;top:139px;width:1px;height:2px;background:#000;"></div>
<div style="left:1091.0px;top:139px;width:1px;height:2px;background:#000;"></div>
<div style="left:1098.1px;top:138px;width:1px;height:4px;background:#000;"></div>
<div style="left:1105.1px;top:139px;width:1px;height:2px;background:#000;"></div>
<div style="left:1119.3px;top:139px;width:1px;height:2px;background:#000;"></div>
<div style="left:1126.4px;top:138px;width:1px;height:4px;background:#000;"></div>
<div style="left:1133.4px;top:139px;width:1px;height:2px;background:#000;"></div>
<div style="left:1147.6px;top:139px;width:1px;height:2px;background:#000;"></div>
<div style="left:1154.7px;top:138px;width:1px;height:4px;background:#000;"></div>
<div style="left:1161.7px;top:139px;width:1px;height:2px;background:#000;"></div>
<div style="left:1175.9px;top:139px;width:1px;height:2px;background:#000;"></div>
<div style="left:1183.0px;top:138px;width:1px;height:4px;background:#000;"></div>
<div style="left:1190.0px;top:139px;width:1px;height:2px;background:#000;"></div>
<div style="left:1204.2px;top:139px;width:1px;height:2px;background:#000;"></div>
<div style="left:1211.2px;top:138px;width:1px;height:4px;background:#000;"></div>
<div style="left:1218.3px;top:139px;width:1px;height:2px;background:#000;"></div>
<div style="left:1232.5px;top:139px;width:1px;height:2px;background:#000;"></div>
<div style="left:1239.6px;top:138px;width:1px;height:4px;background:#000;"></div>
<div style="left:744.3px;top:147px;width:1px;height:3px;background:#b8b8b8;"></div>
<div style="left:772.6px;top:147px;width:1px;height:3px;background:#b8b8b8;"></div>
<div style="left:800.9px;top:147px;width:1px;height:3px;background:#b8b8b8;"></div>
<div style="left:829.2px;top:147px;width:1px;height:3px;background:#b8b8b8;"></div>
<div style="left:857.5px;top:147px;width:1px;height:3px;background:#b8b8b8;"></div>
<div style="left:885.8px;top:147px;width:1px;height:3px;background:#b8b8b8;"></div>
<div style="left:914.1px;top:147px;width:1px;height:3px;background:#b8b8b8;"></div>
<div style="left:942.4px;top:147px;width:1px;height:3px;background:#b8b8b8;"></div>
<div style="left:970.7px;top:147px;width:1px;height:3px;background:#b8b8b8;"></div>
<div style="left:999.0px;top:147px;width:1px;height:3px;background:#b8b8b8;"></div>
<div style="left:1027.3px;top:147px;width:1px;height:3px;background:#b8b8b8;"></div>
<div style="left:1055.6px;top:147px;width:1px;height:3px;background:#b8b8b8;"></div>
<div style="left:1083.9px;top:147px;width:1px;height:3px;background:#b8b8b8;"></div>
<div style="left:1112.2px;top:147px;width:1px;height:3px;background:#b8b8b8;"></div>
<div style="left:1140.5px;top:147px;width:1px;height:3px;background:#b8b8b8;"></div>
<div style="left:1168.8px;top:147px;width:1px;height:3px;background:#b8b8b8;"></div>
<div style="left:1197.1px;top:147px;width:1px;height:3px;background:#b8b8b8;"></div>
<div style="left:1225.4px;top:147px;width:1px;height:3px;background:#b8b8b8;"></div>
<div style="left:710px;top:130px;width:13px;height:22px"><svg width="13" height="22" style="display:block"><path d="M1.5 9.5 L6.5 4.5 L11.5 9.5 V13.5 H1.5Z M1.5 13.5 H11.5 V19.5 H1.5Z" fill="#fff" stroke="#000"/></svg></div>
<div style="left:738px;top:131px;width:13px;height:13px"><svg width="13" height="13" style="display:block"><path d="M1.5 1.5 H11.5 L6.5 7.5 Z" fill="#fff" stroke="#000"/><path d="M6.5 7.5V12" stroke="#000"/></svg></div>
<div style="left:1206px;top:135px;width:12px;height:11px"><svg width="12" height="11" style="display:block"><path d="M1.5 10.5 L6 4.5 L10.5 10.5Z" fill="#fff" stroke="#000"/></svg></div>
<div style="left:1260px;top:131px;width:20px;height:20px;background:#ececec;"></div>
<div style="left:1262px;top:131px;width:16px;height:3px;background:#d0d0d0;border:1px solid #a0a0a0;box-sizing:border-box"></div>
<div style="left:615px;top:152px;width:645px;height:771px;background:#b4b4b4;"></div>
<div style="left:615px;top:151px;width:26px;height:772px;background:#e4e4e4;"></div>
<div style="left:621px;top:848px;width:15px;height:33px;background:#b4b4b4;"></div>
<div style="left:621px;top:881px;width:15px;height:41px;background:#fff;"></div>
<div style="left:627px;top:852px;width:2px;height:1px;background:#000;"></div>
<div style="left:627px;top:859px;width:2px;height:1px;background:#000;"></div>
<div style="left:627px;top:873px;width:2px;height:1px;background:#000;"></div>
<div style="left:627px;top:889px;width:2px;height:1px;background:#000;"></div>
<div style="left:627px;top:896px;width:2px;height:1px;background:#000;"></div>
<div style="left:627px;top:910px;width:2px;height:1px;background:#000;"></div>
<div style="left:627px;top:917px;width:2px;height:1px;background:#000;"></div>
<div style="left:625px;top:866px;width:5px;height:1px;background:#000;"></div>
<div style="left:625px;top:903px;width:5px;height:1px;background:#000;"></div>
<div style="left:624px;top:853px;width:8px;height:8px"><svg width="8" height="8" style="display:block"><path d="M1 6H7M6 2V7" stroke="#000" stroke-width="1"/></svg></div>
<div style="left:652px;top:152px;width:599px;height:686px;background:#000;"></div>
<div style="left:653px;top:152px;width:595px;height:683px;background:#fff;"></div>
<div style="left:652px;top:845px;width:599px;height:78px;background:#000;"></div>
<div style="left:653px;top:847px;width:595px;height:76px;background:#fff;"></div>
<div style="left:717px;top:151px;width:1px;height:648px;background:repeating-linear-gradient(#000 0 1px,transparent 1px 3px);"></div>
<div style="left:1212px;top:151px;width:1px;height:648px;background:repeating-linear-gradient(#000 0 1px,transparent 1px 3px);"></div>
<div style="left:717px;top:798px;width:495px;height:1px;background:repeating-linear-gradient(90deg,#000 0 1px,transparent 1px 2px);"></div>
<div style="left:699px;top:799px;width:18px;height:1px;background:#a0a0a0;"></div>
<div style="left:717px;top:799px;width:1px;height:18px;background:#a0a0a0;"></div>
<div style="left:1212px;top:799px;width:18px;height:1px;background:#a0a0a0;"></div>
<div style="left:1212px;top:799px;width:1px;height:18px;background:#a0a0a0;"></div>
<div style="left:717px;top:860px;width:495px;height:1px;background:repeating-linear-gradient(90deg,#909090 0 1px,transparent 1px 3px);"></div>
<div style="left:717px;top:878px;width:495px;height:1px;background:repeating-linear-gradient(90deg,#000 0 1px,transparent 1px 2px);"></div>
<div style="left:717px;top:860px;width:1px;height:63px;background:repeating-linear-gradient(#909090 0 1px,transparent 1px 3px);"></div>
<div style="left:1212px;top:860px;width:1px;height:63px;background:repeating-linear-gradient(#909090 0 1px,transparent 1px 3px);"></div>
<div style="left:699px;top:877px;width:18px;height:1px;background:#a0a0a0;"></div>
<div style="left:1212px;top:877px;width:18px;height:1px;background:#a0a0a0;"></div>
<div style="left:745px;top:880px;color:#000;font:normal 11.7px/16px 'Liberation Mono',monospace;white-space:pre;">Для изменения значений</div>
<div style="left:1260px;top:131px;width:20px;height:808px;background:linear-gradient(90deg,#ececec,#f2f2f2 30%,#f9f9f9 80%,#e0e0e0 93%,#fff 95%);"></div>
<div style="left:1279px;top:50px;width:1px;height:945px;background:#2a2a2a;"></div>
<div style="left:1261px;top:136px;width:17px;height:16px;background:linear-gradient(#fafafa,#dcdcdc);border:1px solid #b8b8b8;border-radius:2px;box-sizing:border-box"></div>
<div style="left:1264px;top:140px;width:11px;height:8px"><svg width="11" height="8" style="display:block"><path d="M1.5 6.5 L5.5 2 L9.5 6.5" fill="none" stroke="#4a5a7a" stroke-width="2"/></svg></div>
<div style="left:1261px;top:599px;width:17px;height:125px;background:linear-gradient(90deg,#f6f6f6,#e0e0e0);border:1px solid #b0b0b0;border-radius:2px;box-sizing:border-box"></div>
<div style="left:1266px;top:656px;width:7px;height:1px;background:#8a8a8a;"></div>
<div style="left:1266px;top:658px;width:7px;height:1px;background:#8a8a8a;"></div>
<div style="left:1266px;top:660px;width:7px;height:1px;background:#8a8a8a;"></div>
<div style="left:1266px;top:662px;width:7px;height:1px;background:#8a8a8a;"></div>
<div style="left:1261px;top:855px;width:17px;height:16px;background:linear-gradient(#fafafa,#dcdcdc);border:1px solid #b8b8b8;border-radius:2px;box-sizing:border-box"></div>
<div style="left:1264px;top:859px;width:11px;height:8px"><svg width="11" height="8" style="display:block"><path d="M1.5 1.5 L5.5 6 L9.5 1.5" fill="none" stroke="#4a5a7a" stroke-width="2"/></svg></div>
<div style="left:1265px;top:875px;width:9px;height:9px"><svg width="9" height="9" style="display:block"><path d="M4.5 0 L8 3.5 H1Z M4.5 4.5 L8 8 H1Z" fill="#000"/></svg></div>
<div style="left:1265px;top:891px;width:9px;height:9px"><svg width="9" height="9" style="display:block"><circle cx="4.5" cy="4.5" r="3.8" fill="#b0b0b0" stroke="#404040"/></svg></div>
<div style="left:1265px;top:907px;width:9px;height:9px"><svg width="9" height="9" style="display:block"><path d="M4.5 4 L8 0.5 H1Z M4.5 8.5 L8 5 H1Z" fill="#000"/></svg></div>
<div style="left:615px;top:922px;width:645px;height:17px;background:#ebebeb;"></div>
<div style="left:652px;top:923px;width:16px;height:16px;background:#dcdcdc;box-shadow:inset 0 0 0 1px #c0c0c0"></div>
<div style="left:619px;top:925px;width:13px;height:12px"><svg width="13" height="12" style="display:block"><path d="M1 2H12M1 5H12M1 8H12M1 11H12" stroke="#000" stroke-width="1.2"/></svg></div>
<div style="left:636px;top:925px;width:13px;height:12px"><svg width="13" height="12" style="display:block"><rect x="0.5" y="1.5" width="10" height="8" fill="#fff" stroke="#000"/><circle cx="9" cy="9" r="3" fill="#2a8a3a"/><circle cx="9" cy="9" r="1.5" fill="#2a5ad0"/></svg></div>
<div style="left:653px;top:925px;width:13px;height:12px"><svg width="13" height="12" style="display:block"><rect x="1.5" y="0.5" width="10" height="11" fill="#fff" stroke="#000"/><path d="M3.5 4H9.5M3.5 6.5H9.5" stroke="#000"/></svg></div>
<div style="left:669px;top:925px;width:13px;height:12px"><svg width="13" height="12" style="display:block"><path d="M1 2H4M6 2H12M3 6H5M7 6H12M3 10H5M7 10H12" stroke="#000" stroke-width="1.2"/></svg></div>
<div style="left:685px;top:924px;width:14px;height:13px"><svg width="14" height="13" style="display:block"><path d="M1 2 Q4 1 7 3 Q10 1 13 2 V11 Q10 10 7 12 Q4 10 1 11Z" fill="#fff" stroke="#000"/><path d="M7 3V12" stroke="#000"/><path d="M3 9 L5 7" stroke="#2a5ad0" stroke-width="1.2"/></svg></div>
<div style="left:701px;top:923px;width:15px;height:16px;background:linear-gradient(#fafafa,#dedede);border:1px solid #b0b0b0;border-radius:2px;box-sizing:border-box"></div>
<div style="left:704px;top:926px;width:9px;height:10px"><svg width="9" height="10" style="display:block"><path d="M6.5 1.5 L2.5 5 L6.5 8.5" fill="none" stroke="#4a5a7a" stroke-width="2"/></svg></div>
<div style="left:718px;top:923px;width:524px;height:16px;background:linear-gradient(#fafafa,#e0e0e0);border:1px solid #b8b8b8;border-radius:2px;box-sizing:border-box"></div>
<div style="left:979px;top:928px;width:1px;height:6px;background:#8a8a8a;"></div>
<div style="left:981px;top:928px;width:1px;height:6px;background:#8a8a8a;"></div>
<div style="left:983px;top:928px;width:1px;height:6px;background:#8a8a8a;"></div>
<div style="left:985px;top:928px;width:1px;height:6px;background:#8a8a8a;"></div>
<div style="left:1243px;top:923px;width:16px;height:16px;background:linear-gradient(#fafafa,#dedede);border:1px solid #b0b0b0;border-radius:2px;box-sizing:border-box"></div>
<div style="left:1247px;top:926px;width:9px;height:10px"><svg width="9" height="10" style="display:block"><path d="M2.5 1.5 L6.5 5 L2.5 8.5" fill="none" stroke="#4a5a7a" stroke-width="2"/></svg></div>
<div style="left:615px;top:939px;width:665px;height:28px;background:linear-gradient(#f9f9f9,#e6e6e6 60%,#d6d6d6);"></div>
<div style="left:621px;top:945px;width:2px;height:2px;background:#a0a0a0;"></div>
<div style="left:621px;top:949px;width:2px;height:2px;background:#a0a0a0;"></div>
<div style="left:621px;top:953px;width:2px;height:2px;background:#a0a0a0;"></div>
<div style="left:621px;top:957px;width:2px;height:2px;background:#a0a0a0;"></div>
<div style="left:627px;top:947px;color:#000;font:normal 12px/14px 'Liberation Sans',sans-serif;white-space:pre;transform-origin:0 0;transform:scaleX(0.9762);">Рисование</div>
<div style="left:686px;top:952px;width:0px;height:0px;background:transparent;border-left:3.5px solid transparent;border-right:3.5px solid transparent;border-top:4px solid #000"></div>
<div style="left:699px;top:944px;width:12px;height:17px"><svg width="12" height="17" style="display:block"><path d="M1.5 1.5 V14 L4.5 11 L7 16 L9 15 L6.5 10 H10.5Z" fill="#fff" stroke="#4a6ab0" stroke-width="1.1"/></svg></div>
<div style="left:716px;top:944px;width:1px;height:18px;background:#b8b8b8;"></div>
<div style="left:725px;top:947px;color:#000;font:normal 12px/14px 'Liberation Sans',sans-serif;white-space:pre;transform-origin:0 0;transform:scaleX(0.9373);">Автофигуры</div>
<div style="left:794px;top:952px;width:0px;height:0px;background:transparent;border-left:3.5px solid transparent;border-right:3.5px solid transparent;border-top:4px solid #000"></div>
<div style="left:808px;top:946px;width:16px;height:14px"><svg width="16" height="14"><line x1="2" y1="1" x2="14" y2="13" stroke="#000" stroke-width="1.5"/></svg></div>
<div style="left:830px;top:946px;width:16px;height:14px"><svg width="16" height="14"><line x1="2" y1="1" x2="13" y2="12" stroke="#000" stroke-width="1.5"/><path d="M14 13 L8 11 L12 7 Z" fill="#000"/></svg></div>
<div style="left:852px;top:946px;width:15px;height:12px;background:transparent;border:1.5px solid #000;box-sizing:border-box"></div>
<div style="left:875px;top:946px;width:16px;height:12px;background:transparent;border:1.5px solid #000;border-radius:50%;box-sizing:border-box"></div>
<div style="left:898px;top:945px;width:15px;height:14px"><svg width="15" height="14" style="display:block"><rect x="0.5" y="0.5" width="14" height="13" fill="#fff" stroke="#4a6ab0"/><text x="2" y="7" font-family="Liberation Sans" font-size="7" fill="#000">A</text><path d="M8 4H13M8 6.5H13M3 9H13M3 11.5H13" stroke="#4a6ab0"/></svg></div>
<div style="left:920px;top:942px;color:#2a5ad0;font:bold 17px/20px 'Liberation Serif',serif;white-space:pre;font-style:italic">A</div>
<div style="left:942px;top:945px;width:17px;height:17px"><svg width="17" height="17" style="display:block"><circle cx="3" cy="8" r="2" fill="#f0c020"/><circle cx="8.5" cy="2.5" r="2" fill="#3a6ad0"/><circle cx="14" cy="8" r="2" fill="#e03030"/><circle cx="8.5" cy="14" r="2" fill="#3a6ad0"/><path d="M4 5 Q5 3 7 2.5 M11 3 Q13 4 13.5 6 M13 10.5 Q12 13 10 14 M6.5 14 Q4 13 3.5 10.5" fill="none" stroke="#3a6ad0"/></svg></div>
<div style="left:968px;top:945px;width:15px;height:16px"><svg width="15" height="16" style="display:block"><rect x="0.5" y="0.5" width="14" height="15" fill="#fff" stroke="#2a4aa0"/><circle cx="7.5" cy="6" r="3" fill="#8a8a8a"/><path d="M2.5 14 Q7.5 7 12.5 14Z" fill="#e07030"/></svg></div>
<div style="left:990px;top:945px;width:16px;height:16px"><svg width="16" height="16" style="display:block"><rect x="0.5" y="0.5" width="15" height="15" fill="#fff" stroke="#2a4aa0"/><path d="M1 14 L6 7 L10 11 L12 9 L15 13 V15 H1Z" fill="#8ab0e0"/><circle cx="11" cy="4.5" r="2" fill="#f08030"/></svg></div>
<div style="left:1012px;top:944px;width:1px;height:18px;background:#c0c0c0;"></div>
<div style="left:1013px;top:944px;width:1px;height:18px;background:#fff;"></div>
<div style="left:1019px;top:944px;width:17px;height:19px"><svg width="17" height="19" style="display:block"><path d="M3 8 L8 3 L13 8 L8 13Z" fill="#fff" stroke="#2a4aa0" stroke-width="1.2"/><path d="M13 8 Q16 10 15 13" fill="none" stroke="#2a4aa0" stroke-width="1.5"/><rect x="0" y="14" width="17" height="4" fill="#ffff00"/></svg></div>
<div style="left:1053px;top:944px;width:18px;height:19px"><svg width="18" height="19" style="display:block"><path d="M3 12 Q4 8 8 9 L15 2 L17 4 L10 11 Q10 14 3 12Z" fill="#6a9ad8" stroke="#2a4aa0" stroke-width=".8"/><path d="M14 2 L17 4" stroke="#d0a030" stroke-width="2"/><rect x="0" y="14" width="17" height="4" fill="#0030ff"/></svg></div>
<div style="left:1089px;top:942px;color:#1a3a9a;font:bold 16px/18px 'Liberation Serif',serif;white-space:pre;">A</div>
<div style="left:1087px;top:958px;width:17px;height:4px;background:#000;"></div>
<div style="left:1042px;top:953px;width:0px;height:0px;background:transparent;border-left:3px solid transparent;border-right:3px solid transparent;border-top:3px solid #000"></div>
<div style="left:1076px;top:953px;width:0px;height:0px;background:transparent;border-left:3px solid transparent;border-right:3px solid transparent;border-top:3px solid #000"></div>
<div style="left:1110px;top:953px;width:0px;height:0px;background:transparent;border-left:3px solid transparent;border-right:3px solid transparent;border-top:3px solid #000"></div>
<div style="left:1120px;top:949px;width:16px;height:2.5px;background:#000;"></div>
<div style="left:1120px;top:954px;width:16px;height:3px;background:#000;"></div>
<div style="left:1144px;top:949px;width:16px;height:1px;background:repeating-linear-gradient(90deg,#000 0 2px,transparent 2px 3px);"></div>
<div style="left:1144px;top:952px;width:16px;height:1px;background:repeating-linear-gradient(90deg,#000 0 2px,transparent 2px 3px);"></div>
<div style="left:1144px;top:955px;width:16px;height:1px;background:repeating-linear-gradient(90deg,#000 0 2px,transparent 2px 3px);"></div>
<div style="left:1166px;top:945px;width:17px;height:16px"><svg width="17" height="16" style="display:block"><path d="M1 4H15 M11 1 L15 4 L11 7 M16 12H2 M6 9 L2 12 L6 15" fill="none" stroke="#000" stroke-width="1.5"/></svg></div>
<div style="left:1191px;top:946px;width:13px;height:13px;background:linear-gradient(135deg,#a8dca8,#3a9a3a);box-shadow:1px 1px 1px #888;border-radius:1px"></div>
<div style="left:1213px;top:944px;width:17px;height:17px"><svg width="17" height="17" style="display:block"><path d="M1 5 L5 1 H16 V12 L12 16 H1Z" fill="#5ab05a" stroke="#2a6a2a" stroke-width=".8"/><path d="M1 5 H12 V16 M12 5 L16 1" fill="none" stroke="#2a6a2a" stroke-width=".8"/><path d="M1.5 5 L5 1.5 H15.5 L12 5Z" fill="#a8dca8"/></svg></div>
<div style="left:1234px;top:941px;width:13px;height:24px;background:linear-gradient(90deg,#d4d4d4,#bcbcbc);border-radius:0 3px 3px 0"></div>
<div style="left:1237px;top:958px;width:7px;height:1.5px;background:#000;"></div>
<div style="left:1238px;top:960px;width:5px;height:0px;background:transparent;border-left:2.5px solid transparent;border-right:2.5px solid transparent;border-top:3px solid #000"></div>
<div style="left:615px;top:967px;width:665px;height:22px;background:#ececec;"></div>
<div style="left:615px;top:967px;width:665px;height:1px;background:#d0d0d0;"></div>
<div style="left:625.5px;top:972px;color:#000;font:normal 11.5px/14px 'Liberation Sans',sans-serif;white-space:pre;transform-origin:0 0;transform:scaleX(1.0682);">Стр. 5</div>
<div style="left:692px;top:972px;color:#000;font:normal 11.5px/14px 'Liberation Sans',sans-serif;white-space:pre;transform-origin:0 0;transform:scaleX(1.0175);">Разд 1</div>
<div style="left:774px;top:972px;color:#000;font:normal 11.5px/14px 'Liberation Sans',sans-serif;white-space:pre;transform-origin:0 0;transform:scaleX(1.0000);">5/5</div>
<div style="left:822px;top:972px;color:#000;font:normal 11.5px/14px 'Liberation Sans',sans-serif;white-space:pre;transform-origin:0 0;transform:scaleX(0.9885);">На 1,2см</div>
<div style="left:883.5px;top:972px;color:#000;font:normal 11.5px/14px 'Liberation Sans',sans-serif;white-space:pre;transform-origin:0 0;transform:scaleX(1.0357);">Ст 1</div>
<div style="left:928.5px;top:972px;color:#000;font:normal 11.5px/14px 'Liberation Sans',sans-serif;white-space:pre;transform-origin:0 0;transform:scaleX(1.0409);">Кол 23</div>
<div style="left:993.5px;top:972px;color:#a8a8a8;font:normal 11.5px/14px 'Liberation Sans',sans-serif;white-space:pre;transform-origin:0 0;transform:scaleX(0.8346);">ЗАП</div>
<div style="left:1023.5px;top:972px;color:#a8a8a8;font:normal 11.5px/14px 'Liberation Sans',sans-serif;white-space:pre;transform-origin:0 0;transform:scaleX(0.8150);">ИСПР</div>
<div style="left:1060.5px;top:972px;color:#a8a8a8;font:normal 11.5px/14px 'Liberation Sans',sans-serif;white-space:pre;transform-origin:0 0;transform:scaleX(0.9224);">ВДЛ</div>
<div style="left:1092.5px;top:972px;color:#a8a8a8;font:normal 11.5px/14px 'Liberation Sans',sans-serif;white-space:pre;transform-origin:0 0;transform:scaleX(0.8470);">ЗАМ</div>
<div style="left:1123.5px;top:972px;color:#000;font:normal 11.5px/14px 'Liberation Sans',sans-serif;white-space:pre;transform-origin:0 0;transform:scaleX(0.9457);">русский (Ро</div>
<div style="left:1203px;top:971px;width:19px;height:16px"><svg width="19" height="16" style="display:block"><path d="M1 3 H8 V14 H1Z M3 1 H10 V12" fill="#f4f4f4" stroke="#333" stroke-width="1.2"/><path d="M5 2 H12 V13 H5" fill="none" stroke="#333" stroke-width="1"/><path d="M11 6 L18 14 M18 6 L11 14" stroke="#c02020" stroke-width="1.8"/></svg></div>
<div style="left:611px;top:989px;width:669px;height:6px;background:#3a3a3a;"></div>
<div style="left:745px;top:152px;width:459px;height:137px;background:#d4d0c8;"></div>
<div style="left:1203px;top:151px;width:1px;height:138px;background:#a0a0a0;"></div>
<div style="left:745px;top:288px;width:459px;height:1px;background:#a0a0a0;"></div>
<div style="left:748px;top:152px;width:452px;height:134px;overflow:hidden"><div style="left:-748px;top:-152px;width:1280px;height:1024px">
<div style="left:748.0px;top:149.37px;width:452.0px;height:68.24px;background:#000080;"></div>
<div style="left:750px;top:151px;width:1px;height:67px;background:#c0c0c0;"></div>
<div style="left:1196px;top:151px;width:1px;height:67px;background:#c0c0c0;"></div>
<div style="left:748.0px;top:217.61px;width:452.0px;height:59.71px;background:#008080;"></div>
<div style="left:753.65px;top:220.45px;width:440.7px;height:1.14px;background:#e0ffff;"></div>
<div style="left:753.65px;top:222.87px;width:440.7px;height:1.14px;background:#e0ffff;"></div>
<div style="left:749.06px;top:220.45px;width:4.59px;height:1.13px;background:#e0ffff;"></div>
<div style="left:749.06px;top:220.45px;width:1.13px;height:5.69px;background:#e0ffff;"></div>
<div style="left:751.53px;top:222.87px;width:2.12px;height:1.13px;background:#e0ffff;"></div>
<div style="left:751.53px;top:222.87px;width:1.13px;height:3.27px;background:#e0ffff;"></div>
<div style="left:1194.35px;top:220.45px;width:4.66px;height:1.13px;background:#e0ffff;"></div>
<div style="left:1197.88px;top:220.45px;width:1.13px;height:5.69px;background:#e0ffff;"></div>
<div style="left:1194.35px;top:222.87px;width:2.19px;height:1.13px;background:#e0ffff;"></div>
<div style="left:1195.41px;top:222.87px;width:1.13px;height:3.27px;background:#e0ffff;"></div>
<div style="left:759.3px;top:217.61px;width:16.95px;height:8.53px;background:#008080;"></div>
<div style="left:759.30px;top:218.68px;font:bold 9.42px/8.53px 'Liberation Mono',monospace;white-space:pre;letter-spacing:0"><span style="color:#ffffff">[</span></div>
<div style="left:770.60px;top:218.68px;font:bold 9.42px/8.53px 'Liberation Mono',monospace;white-space:pre;letter-spacing:0"><span style="color:#ffffff">]</span></div>
<div style="left:766.36px;top:219.74px;width:2.83px;height:5.69px;background:#00ff00;"></div>
<div style="left:951.4px;top:217.61px;width:50.85px;height:8.53px;background:#008080;"></div>
<div style="left:951.40px;top:218.68px;font:bold 9.42px/8.53px 'Liberation Mono',monospace;white-space:pre;letter-spacing:0"><span style="color:#ffffff"> Watches </span></div>
<div style="left:1160.45px;top:217.61px;width:28.25px;height:8.53px;background:#008080;"></div>
<div style="left:1160.45px;top:218.68px;font:bold 9.42px/8.53px 'Liberation Mono',monospace;white-space:pre;letter-spacing:0"><span style="color:#ffffff">3</span></div>
<div style="left:1166.1px;top:220.45px;width:5.65px;height:1.14px;background:#e0ffff;"></div>
<div style="left:1166.1px;top:222.87px;width:5.65px;height:1.14px;background:#e0ffff;"></div>
<div style="left:1171.75px;top:218.68px;font:bold 9.42px/8.53px 'Liberation Mono',monospace;white-space:pre;letter-spacing:0"><span style="color:#ffffff">[</span></div>
<div style="left:1183.05px;top:218.68px;font:bold 9.42px/8.53px 'Liberation Mono',monospace;white-space:pre;letter-spacing:0"><span style="color:#ffffff">]</span></div>
<div style="left:1179.6000000000001px;top:219.60999999999999px;width:1.4px;height:6px;background:#00ff00;"></div>
<div style="left:1178.4px;top:219.60999999999999px;width:3.8px;height:2px;background:#00ff00;"></div>
<div style="left:749.06px;top:226.14px;width:1.13px;height:42.65px;background:#fff;"></div>
<div style="left:751.53px;top:226.14px;width:1.13px;height:42.65px;background:#fff;"></div>
<div style="left:749.06px;top:268.79px;width:1.13px;height:6.4px;background:#fff;"></div>
<div style="left:749.06px;top:274.05px;width:4.59px;height:1.13px;background:#fff;"></div>
<div style="left:751.53px;top:268.79px;width:1.13px;height:3.98px;background:#fff;"></div>
<div style="left:751.53px;top:271.63px;width:2.12px;height:1.13px;background:#fff;"></div>
<div style="left:753.65px;top:271.63px;width:11.3px;height:1.14px;background:#fff;"></div>
<div style="left:753.65px;top:274.05px;width:11.3px;height:1.14px;background:#fff;"></div>
<div style="left:753.65px;top:226.14px;width:440.7px;height:8.53px;background:#008000;"></div>
<div style="left:1194.35px;top:226.14px;width:5.65px;height:42.65px;background:repeating-conic-gradient(#008080 0 25%,#000080 0 50%) 0 0/2px 2px;"></div>
<div style="left:1194.35px;top:226.14px;width:5.65px;height:8.53px;background:#000080;"></div>
<div style="left:1194.35px;top:226.14px;width:5.65px;height:8.53px"><svg width="5.65" height="8.53" style="display:block"><path d="M2.83 1.71 L5.37 7.25 L0.28 7.25Z" fill="#008080"/></svg></div>
<div style="left:1194.35px;top:260.26px;width:5.65px;height:8.53px;background:#000080;"></div>
<div style="left:1194.35px;top:260.26px;width:5.65px;height:8.53px"><svg width="5.65" height="8.53" style="display:block"><path d="M2.83 7.25 L5.37 1.71 L0.28 1.71Z" fill="#008080"/></svg></div>
<div style="left:764.95px;top:268.79px;width:429.4px;height:8.53px;background:#004080;"></div>
<div style="left:764.95px;top:268.79px;width:5.65px;height:8.53px;background:#000080;"></div>
<div style="left:764.95px;top:268.79px;width:5.65px;height:8.53px"><svg width="5.65" height="8.53" style="display:block"><path d="M0.57 4.26 L5.65 0.85 L5.65 7.68Z" fill="#008080"/></svg></div>
<div style="left:770.6px;top:268.79px;width:5.65px;height:8.53px;background:#000080;"></div>
<div style="left:772.1px;top:270.28999999999996px;width:2.5px;height:5.5px;background:#008080;"></div>
<div style="left:1183.05px;top:268.79px;width:5.65px;height:8.53px;background:#000080;"></div>
<div style="left:1183.05px;top:268.79px;width:5.65px;height:8.53px"><svg width="5.65" height="8.53" style="display:block"><path d="M5.09 4.26 L0 0.85 L0 7.68Z" fill="#008080"/></svg></div>
<div style="left:1189.7px;top:272.28999999999996px;width:8.475000000000001px;height:1.4px;background:#00ff00;"></div>
<div style="left:1196.85px;top:268.78999999999996px;width:1.4px;height:4.9px;background:#00ff00;"></div>
<div style="left:748.0px;top:277.32px;width:452.0px;height:8.53px;background:#c0c0c0;"></div>
<div style="left:753.65px;top:278.39px;font:bold 9.42px/8.53px 'Liberation Mono',monospace;white-space:pre;letter-spacing:0"><span style="color:#800000">F1</span><span style="color:#000000"> Help  </span><span style="color:#800000">F7</span><span style="color:#000000"> Trace  </span><span style="color:#800000">F8</span><span style="color:#000000"> Step  </span><span style="color:#800000">  </span><span style="color:#000000"> Edit  </span><span style="color:#800000">Ins</span><span style="color:#000000"> Add  </span><span style="color:#800000">Del</span><span style="color:#000000"> Delete  </span><span style="color:#800000">Alt+F10</span><span style="color:#000000"> Local menu</span></div>
<div style="left:911.85px;top:278.31999999999994px;width:11.3px;height:7px"><svg width="11.3" height="7" style="display:block"><path d="M1 4 L4 1.5 V6.5Z" fill="#800000"/><path d="M3 4H10V0.5" fill="none" stroke="#800000" stroke-width="1.3"/></svg></div>
</div></div>
<div style="left:745px;top:293px;width:467px;color:#000;font:normal 11.7px/16px 'Liberation Mono',monospace;white-space:normal;text-align:justify;text-align-last:justify;">В меню в пункте <span class="w">Debug</span> есть режим <span class="w">Add</span> <span class="w">Watch</span>, в котором есть поле</div>
<div style="left:717px;top:313px;width:300px;color:#000;font:normal 11.7px/16px 'Liberation Mono',monospace;white-space:normal;">ввода и три кнопки:</div>
<div style="left:751px;top:335px;width:455px;height:217px;background:#d4d0c8;"></div>
<div style="left:751px;top:335px;width:3px;height:42px;background:#1e1e1e;"></div>
<div style="left:751px;top:358px;width:3px;height:8px;background:#4a7ad0;"></div>
<div style="left:751px;top:377px;width:3px;height:175px;background:#e8e8e8;"></div>
<div style="left:754px;top:335px;width:2px;height:217px;background:#f2f2f2;"></div>
<div style="left:756px;top:335px;width:450px;height:4px;background:#3a3a3a;"></div>
<div style="left:757px;top:339px;width:446px;height:211px;overflow:hidden"><div style="left:-757px;top:-339px;width:1280px;height:1024px">
<div style="left:757.6px;top:340.5px;width:444.0px;height:8.3px;background:#c0c0c0;"></div>
<div style="left:768.70px;top:341.54px;font:bold 9.25px/8.3px 'Liberation Mono',monospace;white-space:pre;letter-spacing:0"><span style="color:#800000">F</span><span style="color:#000000">ile</span></div>
<div style="left:802.00px;top:341.54px;font:bold 9.25px/8.3px 'Liberation Mono',monospace;white-space:pre;letter-spacing:0"><span style="color:#800000">E</span><span style="color:#000000">dit</span></div>
<div style="left:835.30px;top:341.54px;font:bold 9.25px/8.3px 'Liberation Mono',monospace;white-space:pre;letter-spacing:0"><span style="color:#800000">S</span><span style="color:#000000">earch</span></div>
<div style="left:879.70px;top:341.54px;font:bold 9.25px/8.3px 'Liberation Mono',monospace;white-space:pre;letter-spacing:0"><span style="color:#800000">R</span><span style="color:#000000">un</span></div>
<div style="left:907.45px;top:341.54px;font:bold 9.25px/8.3px 'Liberation Mono',monospace;white-space:pre;letter-spacing:0"><span style="color:#800000">C</span><span style="color:#000000">ompile</span></div>
<div style="left:957.40px;top:341.54px;font:bold 9.25px/8.3px 'Liberation Mono',monospace;white-space:pre;letter-spacing:0"><span style="color:#800000">D</span><span style="color:#000000">ebug</span></div>
<div style="left:996.25px;top:341.54px;font:bold 9.25px/8.3px 'Liberation Mono',monospace;white-space:pre;letter-spacing:0"><span style="color:#800000">T</span><span style="color:#000000">ools</span></div>
<div style="left:1035.10px;top:341.54px;font:bold 9.25px/8.3px 'Liberation Mono',monospace;white-space:pre;letter-spacing:0"><span style="color:#800000">O</span><span style="color:#000000">ptions</span></div>
<div style="left:1085.05px;top:341.54px;font:bold 9.25px/8.3px 'Liberation Mono',monospace;white-space:pre;letter-spacing:0"><span style="color:#800000">W</span><span style="color:#000000">indow</span></div>
<div style="left:1129.45px;top:341.54px;font:bold 9.25px/8.3px 'Liberation Mono',monospace;white-space:pre;letter-spacing:0"><span style="color:#800000">H</span><span style="color:#000000">elp</span></div>
<div style="left:757.6px;top:348.8px;width:444.0px;height:132.8px;background:#000080;"></div>
<div style="left:760.1px;top:352.8px;width:439.0px;height:1px;background:#c0c0c0;"></div>
<div style="left:760.1px;top:352.8px;width:1px;height:132.8px;background:#c0c0c0;"></div>
<div style="left:1198.55px;top:352.8px;width:1px;height:132.8px;background:#c0c0c0;"></div>
<div style="left:940.75px;top:348.8px;width:77.7px;height:8.3px;background:#000080;"></div>
<div style="left:940.75px;top:349.84px;font:bold 9.25px/8.3px 'Liberation Mono',monospace;white-space:pre;letter-spacing:0"><span style="color:#e0e0e0"> NONAME00.PAS </span></div>
<div style="left:1157.2px;top:348.8px;width:16.65px;height:8.3px;background:#000080;"></div>
<div style="left:1157.20px;top:349.84px;font:bold 9.25px/8.3px 'Liberation Mono',monospace;white-space:pre;letter-spacing:0"><span style="color:#e0e0e0"> 1 </span></div>
<div style="left:757.6px;top:481.6px;width:444.0px;height:58.1px;background:#008080;"></div>
<div style="left:763.15px;top:484.37px;width:432.9px;height:1.11px;background:#e0ffff;"></div>
<div style="left:763.15px;top:486.72px;width:432.9px;height:1.11px;background:#e0ffff;"></div>
<div style="left:758.64px;top:484.37px;width:4.51px;height:1.11px;background:#e0ffff;"></div>
<div style="left:758.64px;top:484.37px;width:1.11px;height:5.53px;background:#e0ffff;"></div>
<div style="left:761.07px;top:486.72px;width:2.08px;height:1.11px;background:#e0ffff;"></div>
<div style="left:761.07px;top:486.72px;width:1.11px;height:3.18px;background:#e0ffff;"></div>
<div style="left:758.64px;top:489.9px;width:1.11px;height:41.5px;background:#fff;"></div>
<div style="left:761.07px;top:489.9px;width:1.11px;height:41.5px;background:#fff;"></div>
<div style="left:758.64px;top:531.4px;width:1.11px;height:6.23px;background:#fff;"></div>
<div style="left:758.64px;top:536.52px;width:4.51px;height:1.11px;background:#fff;"></div>
<div style="left:761.07px;top:531.4px;width:1.11px;height:3.87px;background:#fff;"></div>
<div style="left:761.07px;top:534.17px;width:2.08px;height:1.11px;background:#fff;"></div>
<div style="left:763.15px;top:534.17px;width:11.1px;height:1.11px;background:#fff;"></div>
<div style="left:763.15px;top:536.52px;width:11.1px;height:1.11px;background:#fff;"></div>
<div style="left:768.7px;top:481.6px;width:16.65px;height:8.3px;background:#008080;"></div>
<div style="left:768.70px;top:482.64px;font:bold 9.25px/8.3px 'Liberation Mono',monospace;white-space:pre;letter-spacing:0"><span style="color:#ffffff">[</span></div>
<div style="left:779.80px;top:482.64px;font:bold 9.25px/8.3px 'Liberation Mono',monospace;white-space:pre;letter-spacing:0"><span style="color:#ffffff">]</span></div>
<div style="left:775.64px;top:483.68px;width:2.77px;height:5.53px;background:#00ff00;"></div>
<div style="left:763.15px;top:489.9px;width:432.9px;height:8.3px;background:#008000;"></div>
<div style="left:1196.05px;top:489.9px;width:5.55px;height:41.5px;background:repeating-conic-gradient(#008080 0 25%,#000080 0 50%) 0 0/2px 2px;"></div>
<div style="left:1196.05px;top:489.9px;width:5.55px;height:8.3px;background:#000080;"></div>
<div style="left:1196.05px;top:489.90px;width:5.55px;height:8.30px"><svg width="5.55" height="8.30" style="display:block"><path d="M2.77 1.66 L5.27 7.06 L0.28 7.06Z" fill="#008080"/></svg></div>
<div style="left:1196.05px;top:523.1px;width:5.55px;height:8.3px;background:#000080;"></div>
<div style="left:1196.05px;top:523.10px;width:5.55px;height:8.30px"><svg width="5.55" height="8.30" style="display:block"><path d="M2.77 7.06 L5.27 1.66 L0.28 1.66Z" fill="#008080"/></svg></div>
<div style="left:774.25px;top:531.4px;width:421.8px;height:8.3px;background:#004080;"></div>
<div style="left:774.25px;top:531.4px;width:5.55px;height:8.3px;background:#000080;"></div>
<div style="left:774.25px;top:531.40px;width:5.55px;height:8.30px"><svg width="5.55" height="8.30" style="display:block"><path d="M0.56 4.15 L5.55 0.83 L5.55 7.47Z" fill="#008080"/></svg></div>
<div style="left:779.8px;top:531.4px;width:5.55px;height:8.3px;background:#000080;"></div>
<div style="left:781.3000000000001px;top:532.9px;width:2.5px;height:5.5px;background:#008080;"></div>
<div style="left:1184.95px;top:531.4px;width:5.55px;height:8.3px;background:#000080;"></div>
<div style="left:1184.95px;top:531.40px;width:5.55px;height:8.30px"><svg width="5.55" height="8.30" style="display:block"><path d="M5.00 4.15 L0 0.83 L0 7.47Z" fill="#008080"/></svg></div>
<div style="left:1191.5px;top:534.9px;width:8.325px;height:1.4px;background:#00ff00;"></div>
<div style="left:1198.55px;top:531.4px;width:1.4px;height:4.9px;background:#00ff00;"></div>
<div style="left:757.6px;top:539.7px;width:444.0px;height:8.3px;background:#c0c0c0;"></div>
<div style="left:763.15px;top:540.74px;font:bold 9.25px/8.3px 'Liberation Mono',monospace;white-space:pre;letter-spacing:0"><span style="color:#800000">F1</span><span style="color:#000000"> Help   Enter expression to add as watch</span></div>
<div style="left:809.5500000000001px;top:540.7px;width:1.5px;height:7.5px;background:#000000;"></div>
<div style="left:1162.75px;top:481.6px;width:27.75px;height:8.3px;background:#008080;"></div>
<div style="left:1162.75px;top:482.64px;font:bold 9.25px/8.3px 'Liberation Mono',monospace;white-space:pre;letter-spacing:0"><span style="color:#ffffff">3</span></div>
<div style="left:1168.3px;top:484.37px;width:5.55px;height:1.11px;background:#e0ffff;"></div>
<div style="left:1168.3px;top:486.72px;width:5.55px;height:1.11px;background:#e0ffff;"></div>
<div style="left:1173.85px;top:482.64px;font:bold 9.25px/8.3px 'Liberation Mono',monospace;white-space:pre;letter-spacing:0"><span style="color:#ffffff">[</span></div>
<div style="left:1184.95px;top:482.64px;font:bold 9.25px/8.3px 'Liberation Mono',monospace;white-space:pre;letter-spacing:0"><span style="color:#ffffff">]</span></div>
<div style="left:1181.6000000000001px;top:483.6px;width:1.4px;height:6px;background:#00ff00;"></div>
<div style="left:1180.4px;top:483.6px;width:3.8px;height:2px;background:#00ff00;"></div>
<div style="left:1196.05px;top:484.37px;width:4.58px;height:1.11px;background:#e0ffff;"></div>
<div style="left:1199.52px;top:484.37px;width:1.11px;height:5.53px;background:#e0ffff;"></div>
<div style="left:1196.05px;top:486.72px;width:2.15px;height:1.11px;background:#e0ffff;"></div>
<div style="left:1197.09px;top:486.72px;width:1.11px;height:3.18px;background:#e0ffff;"></div>
<div style="left:829.75px;top:415.2px;width:316.35px;height:74.7px;background:#000000;"></div>
<div style="left:829.75px;top:481.6px;width:316.34999999999997px;height:8.3px;background:#000000;"></div>
<div style="left:829.75px;top:484.37px;width:316.35px;height:1.11px;background:#808080;"></div>
<div style="left:829.75px;top:486.72px;width:316.35px;height:1.11px;background:#808080;"></div>
<div style="left:951.85px;top:481.6px;width:49.95px;height:8.3px;background:#000000;"></div>
<div style="left:951.85px;top:482.64px;font:bold 9.25px/8.3px 'Liberation Mono',monospace;white-space:pre;letter-spacing:0"><span style="color:#a0a0a0"> Watches </span></div>
<div style="left:818.65px;top:406.9px;width:316.35px;height:74.7px;background:#c0c0c0;"></div>
<div style="left:820.18px;top:409.80px;width:313.30px;height:68.89px;box-sizing:border-box;border:1.11px solid #ffffff"></div>
<div style="left:822.67px;top:412.29px;width:308.30px;height:63.91px;box-sizing:border-box;border:1.11px solid #ffffff"></div>
<div style="left:829.75px;top:406.9px;width:16.65px;height:8.3px;background:#c0c0c0;"></div>
<div style="left:829.75px;top:407.94px;font:bold 9.25px/8.3px 'Liberation Mono',monospace;white-space:pre;letter-spacing:0"><span style="color:#ffffff">[</span></div>
<div style="left:840.85px;top:407.94px;font:bold 9.25px/8.3px 'Liberation Mono',monospace;white-space:pre;letter-spacing:0"><span style="color:#ffffff">]</span></div>
<div style="left:836.69px;top:408.97px;width:2.77px;height:5.53px;background:#00ff00;"></div>
<div style="left:946.3px;top:406.9px;width:61.05px;height:8.3px;background:#c0c0c0;"></div>
<div style="left:946.30px;top:407.94px;font:bold 9.25px/8.3px 'Liberation Mono',monospace;white-space:pre;letter-spacing:0"><span style="color:#ffffff"> Add Watch </span></div>
<div style="left:835.30px;top:424.54px;font:bold 9.25px/8.3px 'Liberation Mono',monospace;white-space:pre;letter-spacing:0"><span style="color:#ffff00">W</span><span style="color:#ffffff">atch expression</span></div>
<div style="left:835.3px;top:431.8px;width:260.85px;height:8.3px;background:#000080;"></div>
<div style="left:1099.15px;top:431.8px;width:11.5px;height:8.3px;background:#008000;"></div>
<div style="left:1102.7px;top:432.8px;width:6px;height:7px"><svg width="6" height="7" style="display:block"><path d="M2 0.5H4V4H5.5L3 7L0.5 4H2Z" fill="#000"/></svg></div>
<div style="left:951.85px;top:452.4px;width:44.4px;height:8.3px;background:#000000;"></div>
<div style="left:946.3px;top:448.4px;width:44.4px;height:8.3px;background:#008000;"></div>
<div style="left:962.95px;top:449.44px;font:bold 9.25px/8.3px 'Liberation Mono',monospace;white-space:pre;letter-spacing:0"><span style="color:#00ffff">O</span><span style="color:#ffff00">K</span></div>
<div style="left:1012.9px;top:452.4px;width:44.4px;height:8.3px;background:#000000;"></div>
<div style="left:1007.35px;top:448.4px;width:44.4px;height:8.3px;background:#008000;"></div>
<div style="left:1012.90px;top:449.44px;font:bold 9.25px/8.3px 'Liberation Mono',monospace;white-space:pre;letter-spacing:0"><span style="color:#000000">Cancel</span></div>
<div style="left:1073.95px;top:452.4px;width:44.4px;height:8.3px;background:#000000;"></div>
<div style="left:1068.4px;top:448.4px;width:44.4px;height:8.3px;background:#008000;"></div>
<div style="left:1079.50px;top:449.44px;font:bold 9.25px/8.3px 'Liberation Mono',monospace;white-space:pre;letter-spacing:0"><span style="color:#000000">Help</span></div>
</div></div>
<div style="left:745px;top:557.5px;width:467px;color:#000;font:normal 11.7px/16px 'Liberation Mono',monospace;white-space:normal;text-align:justify;text-align-last:justify;">В поле ввода вводится одна или несколько переменных, значения</div>
<div style="left:717px;top:577.85px;width:495px;color:#000;font:normal 11.7px/16px 'Liberation Mono',monospace;white-space:normal;text-align:justify;text-align-last:justify;">которых надо отследить. Это окно убирается клавишей <span class="w">Esc</span>. Остается</div>
<div style="left:717px;top:598.2px;width:495px;color:#000;font:normal 11.7px/16px 'Liberation Mono',monospace;white-space:normal;text-align:justify;text-align-last:justify;">окно Watches, в котором указаны имена переменных и, через двоеточие,</div>
<div style="left:717px;top:618.55px;width:495px;color:#000;font:normal 11.7px/16px 'Liberation Mono',monospace;white-space:normal;text-align:justify;text-align-last:justify;">их значения. Используя пошаговое исполнение программы можно видеть,</div>
<div style="left:717px;top:638.9px;width:495px;color:#000;font:normal 11.7px/16px 'Liberation Mono',monospace;white-space:normal;text-align:justify;text-align-last:justify;">как меняются значения этих переменных. Если нужно добавить еще одну</div>
<div style="left:717px;top:659.25px;width:495px;color:#000;font:normal 11.7px/16px 'Liberation Mono',monospace;white-space:normal;text-align:justify;text-align-last:justify;">переменную в окно Watch, то, не выходя из редактора, нужно нажать</div>
<div style="left:717px;top:679.6px;width:495px;color:#000;font:normal 11.7px/16px 'Liberation Mono',monospace;white-space:normal;text-align:justify;text-align-last:justify;">комбинацию клавиш <span class="w">Ctrl</span> + F7. Опять появится окно <span class="w">Add</span> <span class="w">Watch</span>, в</div>
<div style="left:717px;top:699.95px;width:495px;color:#000;font:normal 11.7px/16px 'Liberation Mono',monospace;white-space:normal;text-align:justify;text-align-last:justify;">которое добавляется имя новой переменной. Если окно Watch активно,</div>
<div style="left:717px;top:720.3px;width:495px;color:#000;font:normal 11.7px/16px 'Liberation Mono',monospace;white-space:normal;text-align:justify;text-align-last:justify;">из его списка можно удалить имя переменной. Для этого выбирается</div>
<div style="left:717px;top:740.65px;width:495px;color:#000;font:normal 11.7px/16px 'Liberation Mono',monospace;white-space:normal;text-align:justify;text-align-last:justify;">переменная с помощью клавиш управления курсором и нажимается клавиша</div>
<div style="left:717px;top:761.0px;width:495px;color:#000;font:normal 11.7px/16px 'Liberation Mono',monospace;white-space:normal;"><span class="w">Delete</span>.</div>
<div style="left:745px;top:781.35px;width:467px;color:#000;font:normal 11.7px/16px 'Liberation Mono',monospace;white-space:normal;">Окно Watch убирается и восстанавливается с помощью клавиши F6.</div>
<div style="left:20px;top:1px;width:34px;height:17px"><svg width="34" height="17" style="display:block"><rect x="2" y="7" width="8" height="10" fill="#d8d8d8" stroke="#8a8a8a" stroke-width=".8"/><rect x="4" y="10" width="2" height="2" fill="#30d030"/><path d="M12 3 L31 1.5 L32 16 L11 17Z" fill="#e8e8e0" stroke="#b8b8a8" stroke-width=".8"/><path d="M14 5 L29 4 L30 15 L13 16Z" fill="#2a50d8"/><path d="M20 4.5 L29 4 L30 15 L24 15.5Z" fill="#8ab0f0"/></svg></div>
<div style="left:96px;top:2px;width:24px;height:15px"><svg width="24" height="15" style="display:block"><path d="M3 0 L20 3 V15 H3Z" fill="#dfe8ef" stroke="#5a8a9a" stroke-width=".8"/><path d="M3 0 L7 1 V15 H3Z" fill="#7ab0c0"/><rect x="10" y="6" width="7" height="5" fill="#5aa0d0"/></svg></div>
<div style="left:170px;top:1px;width:32px;height:16px"><svg width="32" height="16" style="display:block"><path d="M9 1 H25 L30 6 V16 H9Z" fill="#f6f6f6" stroke="#c8c8c8" stroke-width=".8"/><path d="M2 16 Q6 9 12 11 Q16 6 22 9 L20 16Z" fill="#2a7ad0"/><circle cx="16" cy="10" r="3" fill="#5ab0f0"/></svg></div>
<div style="left:1005px;top:3px;width:18px;height:15px;background:#e8f0f8;box-shadow:inset 0 0 0 1px #7a9ad0"></div>
<div style="left:997px;top:6px;width:14px;height:12px;background:#fff;box-shadow:inset 0 0 0 1px #2a4aa0"></div>
<div style="left:998px;top:6px;color:#1a3aa0;font:bold 11px/13px 'Liberation Serif',serif;white-space:pre;">W</div>
<div style="left:1030px;top:0px;width:250px;height:19px;background:linear-gradient(#4a4a4a,#2a2a2a);border-radius:0 0 0 6px;box-shadow:inset 0 -1px #5a5a5a"></div>
<div style="left:1034px;top:3px;width:14px;height:15px;background:linear-gradient(#b070f0,#7a2ad0);border-radius:4px;box-shadow:0 0 0 1px #2a1a3a"></div>
<div style="left:1050px;top:3px;width:14px;height:15px;background:linear-gradient(#b070f0,#7a2ad0);border-radius:4px;box-shadow:0 0 0 1px #2a1a3a"></div>
<div style="left:1066px;top:3px;width:14px;height:15px;background:linear-gradient(#b070f0,#7a2ad0);border-radius:4px;box-shadow:0 0 0 1px #2a1a3a"></div>
<div style="left:1082px;top:3px;width:14px;height:15px;background:linear-gradient(#b070f0,#7a2ad0);border-radius:4px;box-shadow:0 0 0 1px #2a1a3a"></div>
<div style="left:1098px;top:3px;width:14px;height:15px;background:linear-gradient(#b070f0,#7a2ad0);border-radius:4px;box-shadow:0 0 0 1px #2a1a3a"></div>
<div style="left:1037px;top:3px;color:#fff;font:normal 9px/15px 'Liberation Sans',sans-serif;white-space:pre;">▶</div>
<div style="left:1054px;top:7px;width:2px;height:7px;background:#fff;"></div>
<div style="left:1058px;top:7px;width:2px;height:7px;background:#fff;"></div>
<div style="left:1070px;top:7px;width:6px;height:6px;background:#fff;"></div>
<div style="left:1084px;top:3px;color:#fff;font:normal 9px/15px 'Liberation Sans',sans-serif;white-space:pre;">⏮</div>
<div style="left:1100px;top:3px;color:#fff;font:normal 9px/15px 'Liberation Sans',sans-serif;white-space:pre;">⏭</div>
<div style="left:1114px;top:3px;width:73px;height:15px;background:linear-gradient(#9a5af0,#6a1ac8);border-radius:4px;box-shadow:0 0 0 1px #2a1a3a"></div>
<div style="left:1148px;top:4px;color:#e8d8ff;font:bold 11px/13px 'Liberation Mono',monospace;white-space:pre;">-83:68</div>
<div style="left:1191px;top:1px;color:#9a9a9a;font:bold 7px/8px 'Liberation Sans',sans-serif;white-space:pre;transform-origin:0 0;transform:scaleX(1.1017);">VOLUME</div>
<div style="left:1191px;top:12px;width:52px;height:5px;background:#111;border-radius:3px"></div>
<div style="left:1190px;top:11px;width:14px;height:8px;background:linear-gradient(#fff,#c8c8c8);border-radius:4px"></div>
<div style="left:1251px;top:4px;width:14px;height:15px;background:linear-gradient(#8a8a8a,#5a5a5a);border-radius:4px;box-shadow:0 0 0 1px #1a1a1a"></div>
<div style="left:1255px;top:8px;width:6px;height:6px;background:#fff;clip-path:polygon(50% 0,100% 60%,0 60%)"></div>
<div style="left:1255px;top:15px;width:6px;height:1px;background:#fff;"></div>
<div style="left:1267px;top:4px;width:12px;height:11px;background:linear-gradient(#b070f0,#7a2ad0);border-radius:3px"></div>
<div style="left:21px;top:17px;width:652px;height:338px;background:#ebe8dc;border-radius:2px"></div>
<div style="left:22px;top:18px;width:650px;height:336px;background:#f6f5f0;"></div>
<div style="left:25px;top:21px;width:644px;height:25px;background:linear-gradient(90deg,#2a2a2a,#3a3a3a 35%,#6a6a6a 80%,#7e7e7e);"></div>
<div style="left:25px;top:46px;width:644px;height:1px;background:#f4f4f4;"></div>
<div style="left:25px;top:47px;width:644px;height:2px;background:#a0a0a0;"></div>
<div style="left:30px;top:26px;width:16px;height:12px"><svg width="16" height="12" style="display:block"><rect x="0.5" y="0.5" width="15" height="11" fill="#000" stroke="#a8a8a8"/><rect x="1" y="1" width="14" height="2" fill="#b8b8b8"/><text x="2" y="10" font-family="Liberation Sans" font-weight="bold" font-size="7" fill="#fff">C:\</text></svg></div>
<div style="left:52px;top:27px;color:#fff;font:bold 12.5px/15px 'Liberation Sans',sans-serif;white-space:pre;transform-origin:0 0;transform:scaleX(0.9067);">bp.bat</div>
<div style="left:617px;top:23px;width:16px;height:20px;background:#e2e2e2;box-shadow:inset -1px -1px #808080,inset -2px -2px #bdbdbd,inset 1px 1px #fff"></div>
<div style="left:633px;top:23px;width:16px;height:20px;background:#e2e2e2;box-shadow:inset -1px -1px #808080,inset -2px -2px #bdbdbd,inset 1px 1px #fff"></div>
<div style="left:651px;top:23px;width:16px;height:20px;background:#e2e2e2;box-shadow:inset -1px -1px #808080,inset -2px -2px #bdbdbd,inset 1px 1px #fff"></div>
<div style="left:621px;top:35px;width:6px;height:2.5px;background:#000;"></div>
<div style="left:635px;top:28px;width:10px;height:9px;background:transparent;border:1.2px solid #000;border-top-width:2.5px;box-sizing:border-box"></div>
<div style="left:654px;top:28px;width:10px;height:10px"><svg width="10" height="10" style="display:block"><path d="M1.5 1.5L8.5 8.5M8.5 1.5L1.5 8.5" stroke="#000" stroke-width="2.2"/></svg></div>
<div style="left:25px;top:47px;width:2px;height:302px;background:#a8a8a8;"></div>
<div style="left:667px;top:47px;width:2px;height:302px;background:#f0f0f0;"></div>
<div style="left:27px;top:49px;width:640px;height:12px;background:#c0c0c0;"></div>
<div style="left:43.00px;top:50.50px;font:bold 13.33px/12px 'Liberation Mono',monospace;white-space:pre;letter-spacing:0"><span style="color:#800000">F</span><span style="color:#000000">ile</span></div>
<div style="left:91.00px;top:50.50px;font:bold 13.33px/12px 'Liberation Mono',monospace;white-space:pre;letter-spacing:0"><span style="color:#800000">E</span><span style="color:#000000">dit</span></div>
<div style="left:139.00px;top:50.50px;font:bold 13.33px/12px 'Liberation Mono',monospace;white-space:pre;letter-spacing:0"><span style="color:#800000">S</span><span style="color:#000000">earch</span></div>
<div style="left:203.00px;top:50.50px;font:bold 13.33px/12px 'Liberation Mono',monospace;white-space:pre;letter-spacing:0"><span style="color:#800000">R</span><span style="color:#000000">un</span></div>
<div style="left:243.00px;top:50.50px;font:bold 13.33px/12px 'Liberation Mono',monospace;white-space:pre;letter-spacing:0"><span style="color:#800000">C</span><span style="color:#000000">ompile</span></div>
<div style="left:315.00px;top:50.50px;font:bold 13.33px/12px 'Liberation Mono',monospace;white-space:pre;letter-spacing:0"><span style="color:#800000">D</span><span style="color:#000000">ebug</span></div>
<div style="left:371.00px;top:50.50px;font:bold 13.33px/12px 'Liberation Mono',monospace;white-space:pre;letter-spacing:0"><span style="color:#800000">T</span><span style="color:#000000">ools</span></div>
<div style="left:427.00px;top:50.50px;font:bold 13.33px/12px 'Liberation Mono',monospace;white-space:pre;letter-spacing:0"><span style="color:#800000">O</span><span style="color:#000000">ptions</span></div>
<div style="left:499.00px;top:50.50px;font:bold 13.33px/12px 'Liberation Mono',monospace;white-space:pre;letter-spacing:0"><span style="color:#800000">W</span><span style="color:#000000">indow</span></div>
<div style="left:563.00px;top:50.50px;font:bold 13.33px/12px 'Liberation Mono',monospace;white-space:pre;letter-spacing:0"><span style="color:#800000">H</span><span style="color:#000000">elp</span></div>
<div style="left:27px;top:61px;width:640px;height:276px;background:#000080;"></div>
<div style="left:28.5px;top:73px;width:1.6px;height:252px;background:#fff;"></div>
<div style="left:32.0px;top:73px;width:1.6px;height:252px;background:#fff;"></div>
<div style="left:35px;top:65.0px;width:624px;height:1.6px;background:#fff;"></div>
<div style="left:35px;top:68.4px;width:624px;height:1.6px;background:#fff;"></div>
<div style="left:28.5px;top:65.0px;width:6.5px;height:1.6px;background:#fff;"></div>
<div style="left:28.5px;top:65.0px;width:1.6px;height:8.0px;background:#fff;"></div>
<div style="left:32.0px;top:68.4px;width:3.0px;height:1.6px;background:#fff;"></div>
<div style="left:32.0px;top:68.4px;width:1.6px;height:4.6px;background:#fff;"></div>
<div style="left:28.5px;top:325px;width:1.6px;height:9.0px;background:#fff;"></div>
<div style="left:28.5px;top:332.4px;width:6.5px;height:1.6px;background:#fff;"></div>
<div style="left:32.0px;top:325px;width:1.6px;height:5.6px;background:#fff;"></div>
<div style="left:32.0px;top:329.0px;width:3.0px;height:1.6px;background:#fff;"></div>
<div style="left:659px;top:65.0px;width:6.6px;height:1.6px;background:#fff;"></div>
<div style="left:664.0px;top:65.0px;width:1.6px;height:8.0px;background:#fff;"></div>
<div style="left:659px;top:68.4px;width:3.1px;height:1.6px;background:#fff;"></div>
<div style="left:660.5px;top:68.4px;width:1.6px;height:4.6px;background:#fff;"></div>
<div style="left:43px;top:61px;width:24px;height:12px;background:#000080;"></div>
<div style="left:43.00px;top:62.50px;font:bold 13.33px/12px 'Liberation Mono',monospace;white-space:pre;letter-spacing:0"><span style="color:#ffffff">[</span></div>
<div style="left:59.00px;top:62.50px;font:bold 13.33px/12px 'Liberation Mono',monospace;white-space:pre;letter-spacing:0"><span style="color:#ffffff">]</span></div>
<div style="left:53.0px;top:64.0px;width:4.0px;height:8.0px;background:#00ff00;"></div>
<div style="left:291px;top:61px;width:112px;height:12px;background:#000080;"></div>
<div style="left:291.00px;top:62.50px;font:bold 13.33px/12px 'Liberation Mono',monospace;white-space:pre;letter-spacing:0"><span style="color:#ffffff"> NONAME00.PAS </span></div>
<div style="left:611px;top:61px;width:40px;height:12px;background:#000080;"></div>
<div style="left:611.00px;top:62.50px;font:bold 13.33px/12px 'Liberation Mono',monospace;white-space:pre;letter-spacing:0"><span style="color:#ffffff">1</span></div>
<div style="left:619px;top:65.0px;width:8px;height:1.6px;background:#fff;"></div>
<div style="left:619px;top:68.4px;width:8px;height:1.6px;background:#fff;"></div>
<div style="left:627.00px;top:62.50px;font:bold 13.33px/12px 'Liberation Mono',monospace;white-space:pre;letter-spacing:0"><span style="color:#ffffff">[</span></div>
<div style="left:643.00px;top:62.50px;font:bold 13.33px/12px 'Liberation Mono',monospace;white-space:pre;letter-spacing:0"><span style="color:#ffffff">]</span></div>
<div style="left:635.00px;top:61.00px;width:8.00px;height:12.00px"><svg width="8.00" height="12.00" viewBox="0 0 8 12" preserveAspectRatio="none" style="display:block"><path d="M4 1 L7 4 H5 V8 H7 L4 11 L1 8 H3 V4 H1Z" fill="#00ff00"/></svg></div>
<div style="left:659px;top:73px;width:8px;height:252px;background:repeating-conic-gradient(#008080 0 25%,#000080 0 50%) 0 0/2px 2px;"></div>
<div style="left:659px;top:73px;width:8px;height:12px;background:#008080;"></div>
<div style="left:659.00px;top:73.00px;width:8.00px;height:12.00px"><svg width="8.00" height="12.00" style="display:block"><path d="M4.00 2.40 L7.60 10.20 L0.40 10.20Z" fill="#000080"/></svg></div>
<div style="left:659px;top:313px;width:8px;height:12px;background:#008080;"></div>
<div style="left:659.00px;top:313.00px;width:8.00px;height:12.00px"><svg width="8.00" height="12.00" style="display:block"><path d="M4.00 10.20 L7.60 2.40 L0.40 2.40Z" fill="#000080"/></svg></div>
<div style="left:35px;top:329.0px;width:136px;height:1.6px;background:#fff;"></div>
<div style="left:35px;top:332.4px;width:136px;height:1.6px;background:#fff;"></div>
<div style="left:91px;top:325px;width:40px;height:12px;background:#000080;"></div>
<div style="left:91.00px;top:326.50px;font:bold 13.33px/12px 'Liberation Mono',monospace;white-space:pre;letter-spacing:0"><span style="color:#ffffff"> 1:1 </span></div>
<div style="left:43px;top:326px;width:8px;height:10px"><svg width="8" height="10" style="display:block"><circle cx="4" cy="5" r="2.2" fill="none" stroke="#fff" stroke-width="1.6"/><path d="M4 0.5V2.5M4 7.5V9.5M0 5H1.8M6.2 5H8M1.2 2.2L2.4 3.4M5.6 6.6L6.8 7.8M6.8 2.2L5.6 3.4M2.4 6.6L1.2 7.8" stroke="#fff" stroke-width="1.3"/></svg></div>
<div style="left:171px;top:325px;width:480px;height:12px;background:repeating-conic-gradient(#008080 0 25%,#000080 0 50%) 0 0/2px 2px;"></div>
<div style="left:171px;top:325px;width:8px;height:12px;background:#008080;"></div>
<div style="left:171.00px;top:325.00px;width:8.00px;height:12.00px"><svg width="8.00" height="12.00" style="display:block"><path d="M0.80 6.00 L8.00 1.20 L8.00 10.80Z" fill="#000080"/></svg></div>
<div style="left:179px;top:325px;width:8px;height:12px;background:#008080;"></div>
<div style="left:181px;top:327px;width:4px;height:8px;background:#000080;"></div>
<div style="left:643px;top:325px;width:8px;height:12px;background:#008080;"></div>
<div style="left:643.00px;top:325.00px;width:8.00px;height:12.00px"><svg width="8.00" height="12.00" style="display:block"><path d="M7.20 6.00 L0 1.20 L0 10.80Z" fill="#000080"/></svg></div>
<div style="left:651px;top:330px;width:15.2px;height:2px;background:#00ff00;"></div>
<div style="left:663.8px;top:325px;width:2px;height:7px;background:#00ff00;"></div>
<div style="left:27px;top:337px;width:640px;height:12px;background:#c0c0c0;"></div>
<div style="left:35.00px;top:338.50px;font:bold 13.33px/12px 'Liberation Mono',monospace;white-space:pre;letter-spacing:0"><span style="color:#800000">F1</span><span style="color:#000000"> Help</span></div>
<div style="left:102px;top:338px;width:2px;height:11px;background:#000000;"></div>
<div style="left:115.00px;top:338.50px;font:bold 13.33px/12px 'Liberation Mono',monospace;white-space:pre;letter-spacing:0"><span style="color:#000000">Enter expression to evaluate</span></div>
<div style="left:123px;top:121px;width:472px;height:180px;background:#000000;"></div>
<div style="left:107px;top:109px;width:472px;height:180px;background:#c0c0c0;"></div>
<div style="left:109.20px;top:113.20px;width:467.60px;height:171.60px;box-sizing:border-box;border:1.6px solid #ffffff"></div>
<div style="left:112.80px;top:116.80px;width:460.40px;height:164.40px;box-sizing:border-box;border:1.6px solid #ffffff"></div>
<div style="left:123px;top:109px;width:24px;height:12px;background:#c0c0c0;"></div>
<div style="left:123.00px;top:110.50px;font:bold 13.33px/12px 'Liberation Mono',monospace;white-space:pre;letter-spacing:0"><span style="color:#ffffff">[</span></div>
<div style="left:139.00px;top:110.50px;font:bold 13.33px/12px 'Liberation Mono',monospace;white-space:pre;letter-spacing:0"><span style="color:#ffffff">]</span></div>
<div style="left:133.0px;top:112.0px;width:4.0px;height:8.0px;background:#00ff00;"></div>
<div style="left:259px;top:109px;width:168px;height:12px;background:#c0c0c0;"></div>
<div style="left:259.00px;top:110.50px;font:bold 13.33px/12px 'Liberation Mono',monospace;white-space:pre;letter-spacing:0"><span style="color:#ffffff"> Evaluate and Modify </span></div>
<div style="left:131.00px;top:134.50px;font:bold 13.33px/12px 'Liberation Mono',monospace;white-space:pre;letter-spacing:0"><span style="color:#ffffff">E</span><span style="color:#ffff00">x</span><span style="color:#ffffff">pression</span></div>
<div style="left:131px;top:145px;width:280px;height:12px;background:#000080;"></div>
<div style="left:131.00px;top:170.50px;font:bold 13.33px/12px 'Liberation Mono',monospace;white-space:pre;letter-spacing:0"><span style="color:#ffff00">R</span><span style="color:#000000">esult</span></div>
<div style="left:131px;top:181px;width:280px;height:12px;background:#000080;"></div>
<div style="left:131.00px;top:206.50px;font:bold 13.33px/12px 'Liberation Mono',monospace;white-space:pre;letter-spacing:0"><span style="color:#ffff00">N</span><span style="color:#000000">ew value</span></div>
<div style="left:131px;top:217px;width:280px;height:12px;background:#000080;"></div>
<div style="left:415px;top:145px;width:16px;height:12px;background:#008000;"></div>
<div style="left:419.00px;top:145.00px;width:8.00px;height:12.00px"><svg width="8.00" height="12.00" viewBox="0 0 8 12" preserveAspectRatio="none" style="display:block"><path d="M3 2 H5 V7 H7 L4 10 L1 7 H3Z" fill="#000000"/></svg></div>
<div style="left:415px;top:217px;width:16px;height:12px;background:#008000;"></div>
<div style="left:419.00px;top:217.00px;width:8.00px;height:12.00px"><svg width="8.00" height="12.00" viewBox="0 0 8 12" preserveAspectRatio="none" style="display:block"><path d="M3 2 H5 V7 H7 L4 10 L1 7 H3Z" fill="#000000"/></svg></div>
<div style="left:467px;top:151px;width:88px;height:12px;background:#000000;"></div>
<div style="left:459px;top:145px;width:88px;height:12px;background:#008000;"></div>
<div style="left:467.00px;top:146.50px;font:bold 13.33px/12px 'Liberation Mono',monospace;white-space:pre;letter-spacing:0"><span style="color:#ffff00">E</span><span style="color:#00ffff">valuate</span></div>
<div style="left:467px;top:187px;width:88px;height:12px;background:#000000;"></div>
<div style="left:459px;top:181px;width:88px;height:12px;background:#008000;"></div>
<div style="left:475.00px;top:182.50px;font:bold 13.33px/12px 'Liberation Mono',monospace;white-space:pre;letter-spacing:0"><span style="color:#ffff00">M</span><span style="color:#000000">odify</span></div>
<div style="left:467px;top:223px;width:88px;height:12px;background:#000000;"></div>
<div style="left:459px;top:217px;width:88px;height:12px;background:#008000;"></div>
<div style="left:475.00px;top:218.50px;font:bold 13.33px/12px 'Liberation Mono',monospace;white-space:pre;letter-spacing:0"><span style="color:#000000">Cancel</span></div>
<div style="left:467px;top:259px;width:88px;height:12px;background:#000000;"></div>
<div style="left:459px;top:253px;width:88px;height:12px;background:#008000;"></div>
<div style="left:483.00px;top:254.50px;font:bold 13.33px/12px 'Liberation Mono',monospace;white-space:pre;letter-spacing:0"><span style="color:#000000">Help</span></div>
<div style="left:21px;top:349px;width:652px;height:6px;background:linear-gradient(#fff 0 2px,#e6e3d8 2px);box-shadow:0 1px #7a7a7a"></div>
<div style="left:4px;top:532px;width:395px;height:461px;background:#2b2b2b;border-radius:7px 7px 0 0"></div>
<div style="left:4px;top:532px;width:395px;height:30px;background:linear-gradient(#262626,#2b2b2b 38%,#3e3e3e 48%,#474747 70%,#4a4a4a 92%,#1e1e1e 96%);border-radius:7px 7px 0 0"></div>
<div style="left:11px;top:541px;width:13px;height:15px;background:linear-gradient(90deg,#f6e29a,#e8c25a);border-radius:1px;box-shadow:inset 0 0 0 1px #c89a30"></div>
<div style="left:14px;top:540px;width:10px;height:14px;background:linear-gradient(90deg,#fff1b8,#e6c060);box-shadow:inset 0 0 0 1px #c8a040"></div>
<div style="left:30px;top:540px;color:#fff;font:bold 13px/16px 'Liberation Sans',sans-serif;white-space:pre;transform-origin:0 0;transform:scaleX(0.8443);">C:\Documents and Settings\Admin\Рабочий стол\ПРИ...</div>
<div style="left:328px;top:539px;width:20px;height:20px;background:linear-gradient(#3c3c3c,#2c2c2c);border:1px solid #1a1a1a;border-radius:3px;box-sizing:border-box;box-shadow:inset 0 0 0 1px #4c4c4c"></div>
<div style="left:351px;top:539px;width:20px;height:20px;background:linear-gradient(#3c3c3c,#2c2c2c);border:1px solid #1a1a1a;border-radius:3px;box-sizing:border-box;box-shadow:inset 0 0 0 1px #4c4c4c"></div>
<div style="left:374px;top:539px;width:20px;height:20px;background:linear-gradient(#3c3c3c,#2c2c2c);border:1px solid #1a1a1a;border-radius:3px;box-sizing:border-box;box-shadow:inset 0 0 0 1px #4c4c4c"></div>
<div style="left:333px;top:551px;width:9px;height:4px;background:#fff;"></div>
<div style="left:355px;top:543px;width:12px;height:11px;background:transparent;border:2px solid #fff;border-top-width:3px;box-sizing:border-box"></div>
<div style="left:378px;top:544px;width:13px;height:11px"><svg width="13" height="11" style="display:block"><path d="M1.5 1 L11.5 10 M11.5 1 L1.5 10" stroke="#fff" stroke-width="2"/></svg></div>
<div style="left:8px;top:562px;width:388px;height:20px;background:#e6e6e6;"></div>
<div style="left:17px;top:565px;color:#a4a4a4;font:normal 12px/14px 'Liberation Sans',sans-serif;white-space:pre;transform-origin:0 0;transform:scaleX(0.8978);">Файл</div>
<div style="left:59.4px;top:565px;color:#a4a4a4;font:normal 12px/14px 'Liberation Sans',sans-serif;white-space:pre;transform-origin:0 0;transform:scaleX(0.9027);">Правка</div>
<div style="left:112.5px;top:565px;color:#a4a4a4;font:normal 12px/14px 'Liberation Sans',sans-serif;white-space:pre;transform-origin:0 0;transform:scaleX(0.8518);">Вид</div>
<div style="left:147.5px;top:565px;color:#a4a4a4;font:normal 12px/14px 'Liberation Sans',sans-serif;white-space:pre;transform-origin:0 0;transform:scaleX(0.8877);">Избранное</div>
<div style="left:217px;top:565px;color:#a4a4a4;font:normal 12px/14px 'Liberation Sans',sans-serif;white-space:pre;transform-origin:0 0;transform:scaleX(0.9004);">Сервис</div>
<div style="left:269px;top:565px;color:#a4a4a4;font:normal 12px/14px 'Liberation Sans',sans-serif;white-space:pre;transform-origin:0 0;transform:scaleX(0.9134);">Справка</div>
<div style="left:8px;top:581px;width:388px;height:1px;background:#c8c8c8;"></div>
<div style="left:8px;top:582px;width:388px;height:39px;background:linear-gradient(#e4e4e4,#d6d6d6);"></div>
<div style="left:16px;top:589px;width:26px;height:26px"><svg width="26" height="26" style="display:block"><defs><radialGradient id="bg1" cx="40%" cy="30%" r="70%"><stop offset="0" stop-color="#a8e0ff"/><stop offset=".5" stop-color="#2a7ae0"/><stop offset="1" stop-color="#0a3a98"/></radialGradient></defs><circle cx="13" cy="13" r="11.5" fill="url(#bg1)" stroke="#1a3a80"/><path d="M6 13 L12 7 V10.5 H19.5 V15.5 H12 V19Z" fill="#fff"/></svg></div>
<div style="left:44.4px;top:595px;color:#000;font:normal 12px/14px 'Liberation Sans',sans-serif;white-space:pre;transform-origin:0 0;transform:scaleX(0.8898);">Назад</div>
<div style="left:85px;top:600px;width:0px;height:0px;background:transparent;border-left:4px solid transparent;border-right:4px solid transparent;border-top:4px solid #000"></div>
<div style="left:103px;top:589px;width:26px;height:26px"><svg width="26" height="26" style="display:block"><defs><radialGradient id="bg2" cx="40%" cy="30%" r="70%"><stop offset="0" stop-color="#fafafa"/><stop offset=".6" stop-color="#c4c4c4"/><stop offset="1" stop-color="#8a8a8a"/></radialGradient></defs><circle cx="13" cy="13" r="11.5" fill="url(#bg2)" stroke="#8a8a8a"/><path d="M20 13 L14 7 V10.5 H6.5 V15.5 H14 V19Z" fill="#f4f4f4" stroke="#9a9a9a" stroke-width=".8"/></svg></div>
<div style="left:137px;top:600px;width:0px;height:0px;background:transparent;border-left:4px solid transparent;border-right:4px solid transparent;border-top:4px solid #b0b0a0"></div>
<div style="left:156px;top:593px;width:15px;height:20px;background:linear-gradient(90deg,#f6e29a,#e8c25a);border-radius:1px;box-shadow:inset 0 0 0 1px #c89a30"></div>
<div style="left:159px;top:592px;width:12px;height:19px;background:linear-gradient(90deg,#fff1b8,#e6c060);box-shadow:inset 0 0 0 1px #c8a040"></div>
<div style="left:150px;top:596px;width:14px;height:14px"><svg width="14" height="14" style="display:block"><path d="M12 2 Q4 2 4 9 H1 L5.5 13 L10 9 H7 Q7 5 12 5Z" fill="#2a7ad8" stroke="#1a4a98" stroke-width=".6"/></svg></div>
<div style="left:189px;top:590px;width:24px;height:25px"><svg width="24" height="25" style="display:block"><circle cx="14" cy="9" r="6.5" fill="#e4f2fc" stroke="#7a8a9a" stroke-width="2"/><path d="M9.5 13.5 L2 21" stroke="#6a6a6a" stroke-width="3" stroke-linecap="round"/></svg></div>
<div style="left:215px;top:595px;color:#000;font:normal 12px/14px 'Liberation Sans',sans-serif;white-space:pre;transform-origin:0 0;transform:scaleX(0.9109);">Поиск</div>
<div style="left:259px;top:592px;width:19px;height:21px;background:linear-gradient(90deg,#f6e29a,#e8c25a);border-radius:1px;box-shadow:inset 0 0 0 1px #c89a30"></div>
<div style="left:262px;top:591px;width:16px;height:20px;background:linear-gradient(90deg,#fff1b8,#e6c060);box-shadow:inset 0 0 0 1px #c8a040"></div>
<div style="left:283.8px;top:595px;color:#000;font:normal 12px/14px 'Liberation Sans',sans-serif;white-space:pre;transform-origin:0 0;transform:scaleX(0.9422);">Папки</div>
<div style="left:333px;top:590px;width:26px;height:22px"><svg width="26" height="22" style="display:block"><g stroke="#fff" stroke-width="1.5"><rect x="1.5" y="1.5" width="9" height="8" fill="#5aa0d0"/><rect x="13.5" y="1.5" width="9" height="8" fill="#7ac060"/><rect x="1.5" y="12.5" width="9" height="8" fill="#d05020"/><rect x="13.5" y="12.5" width="9" height="8" fill="#e09050"/></g><path d="M2 7 Q6 4 10 7 V9 H2Z" fill="#3a7a40"/><path d="M14 9 L18 3 L22 9Z" fill="#d06040"/></svg></div>
<div style="left:360px;top:600px;width:0px;height:0px;background:transparent;border-left:4px solid transparent;border-right:4px solid transparent;border-top:4px solid #000"></div>
<div style="left:8px;top:621px;width:388px;height:24px;background:linear-gradient(#e8e8e8,#dcdcdc);"></div>
<div style="left:8px;top:621px;width:388px;height:1px;background:#c4c4c4;"></div>
<div style="left:13px;top:626px;color:#9a9a9a;font:normal 12px/14px 'Liberation Sans',sans-serif;white-space:pre;transform-origin:0 0;transform:scaleX(0.9234);">Адрес:</div>
<div style="left:53px;top:623px;width:261px;height:21px;background:#fff;box-shadow:inset 0 0 0 1px #a8a8a8"></div>
<div style="left:57px;top:626px;width:12px;height:15px;background:linear-gradient(90deg,#f6e29a,#e8c25a);border-radius:1px;box-shadow:inset 0 0 0 1px #c89a30"></div>
<div style="left:60px;top:625px;width:9px;height:14px;background:linear-gradient(90deg,#fff1b8,#e6c060);box-shadow:inset 0 0 0 1px #c8a040"></div>
<div style="left:75.6px;top:627px;color:#000;font:normal 12px/14px 'Liberation Sans',sans-serif;white-space:pre;transform-origin:0 0;transform:scaleX(0.9694);">готово</div>
<div style="left:297px;top:624px;width:16px;height:19px;background:linear-gradient(#f4f4f4,#d8d8d8);box-shadow:inset 0 0 0 1px #a0a0a0"></div>
<div style="left:300px;top:624px;color:#000;font:bold 14px/14px 'Liberation Sans',sans-serif;white-space:pre;">⌄</div>
<div style="left:320px;top:624px;width:21px;height:19px;background:linear-gradient(#f4f6fa,#dde4ee);border:1px solid #b4bccc;border-radius:3px;box-sizing:border-box"></div>
<div style="left:323px;top:623px;color:#2a9a2a;font:bold 14px/20px 'Liberation Sans',sans-serif;white-space:pre;">➔</div>
<div style="left:344px;top:627px;color:#000;font:normal 12px/14px 'Liberation Sans',sans-serif;white-space:pre;transform-origin:0 0;transform:scaleX(0.9020);">Переход</div>
<div style="left:8px;top:645px;width:388px;height:322px;background:#fff;"></div>
<div style="left:25px;top:730px;width:176px;height:17px;background:#e2e2e2;"></div>
<div style="left:8px;top:645px;width:16px;height:17px"><svg width="16" height="17" style="display:block"><path d="M3.5 1.5 H11.5 L14.5 4.5 V16.5 H3.5Z" fill="#e4eefa" stroke="#3a5aa8"/><path d="M11.5 1.5V4.5H14.5" fill="#fff" stroke="#3a5aa8"/><path d="M6 9H12M6 11H12M6 13H12" stroke="#7a9ad0"/><rect x="0.5" y="1.5" width="9" height="8" fill="#fff" stroke="#1a3aa0"/><path d="M1.5 3 L3 8.5 L5 4.5 L7 8.5 L8.5 3" fill="none" stroke="#1a3aa0" stroke-width="1.4"/></svg></div>
<div style="left:25px;top:647px;color:#000;font:normal 12px/14px 'Liberation Sans',sans-serif;white-space:pre;transform-origin:0 0;transform:scaleX(0.9089);">Введение.doc</div>
<div style="left:8px;top:662px;width:16px;height:17px"><svg width="16" height="17" style="display:block"><path d="M3.5 1.5 H11.5 L14.5 4.5 V16.5 H3.5Z" fill="#e4eefa" stroke="#3a5aa8"/><path d="M11.5 1.5V4.5H14.5" fill="#fff" stroke="#3a5aa8"/><path d="M6 9H12M6 11H12M6 13H12" stroke="#7a9ad0"/><rect x="0.5" y="1.5" width="9" height="8" fill="#fff" stroke="#1a3aa0"/><path d="M1.5 3 L3 8.5 L5 4.5 L7 8.5 L8.5 3" fill="none" stroke="#1a3aa0" stroke-width="1.4"/></svg></div>
<div style="left:25px;top:664px;color:#000;font:normal 12px/14px 'Liberation Sans',sans-serif;white-space:pre;transform-origin:0 0;transform:scaleX(0.8786);">Первое знакомство с Паскалем.doc</div>
<div style="left:8px;top:679px;width:16px;height:17px"><svg width="16" height="17" style="display:block"><path d="M3.5 1.5 H11.5 L14.5 4.5 V16.5 H3.5Z" fill="#e4eefa" stroke="#3a5aa8"/><path d="M11.5 1.5V4.5H14.5" fill="#fff" stroke="#3a5aa8"/><path d="M6 9H12M6 11H12M6 13H12" stroke="#7a9ad0"/><rect x="0.5" y="1.5" width="9" height="8" fill="#fff" stroke="#1a3aa0"/><path d="M1.5 3 L3 8.5 L5 4.5 L7 8.5 L8.5 3" fill="none" stroke="#1a3aa0" stroke-width="1.4"/></svg></div>
<div style="left:25px;top:681px;color:#000;font:normal 12px/14px 'Liberation Sans',sans-serif;white-space:pre;transform-origin:0 0;transform:scaleX(0.9185);">Приложение 1. Клавиши быстрого управления.doc</div>
<div style="left:8px;top:696px;width:16px;height:17px"><svg width="16" height="17" style="display:block"><path d="M3.5 1.5 H11.5 L14.5 4.5 V16.5 H3.5Z" fill="#e4eefa" stroke="#3a5aa8"/><path d="M11.5 1.5V4.5H14.5" fill="#fff" stroke="#3a5aa8"/><path d="M6 9H12M6 11H12M6 13H12" stroke="#7a9ad0"/><rect x="0.5" y="1.5" width="9" height="8" fill="#fff" stroke="#1a3aa0"/><path d="M1.5 3 L3 8.5 L5 4.5 L7 8.5 L8.5 3" fill="none" stroke="#1a3aa0" stroke-width="1.4"/></svg></div>
<div style="left:25px;top:698px;color:#000;font:normal 12px/14px 'Liberation Sans',sans-serif;white-space:pre;transform-origin:0 0;transform:scaleX(0.9130);">Приложение 2. Сообщения об ошибках.doc</div>
<div style="left:8px;top:713px;width:16px;height:17px"><svg width="16" height="17" style="display:block"><path d="M3.5 1.5 H11.5 L14.5 4.5 V16.5 H3.5Z" fill="#e4eefa" stroke="#3a5aa8"/><path d="M11.5 1.5V4.5H14.5" fill="#fff" stroke="#3a5aa8"/><path d="M6 9H12M6 11H12M6 13H12" stroke="#7a9ad0"/><rect x="0.5" y="1.5" width="9" height="8" fill="#fff" stroke="#1a3aa0"/><path d="M1.5 3 L3 8.5 L5 4.5 L7 8.5 L8.5 3" fill="none" stroke="#1a3aa0" stroke-width="1.4"/></svg></div>
<div style="left:25px;top:715px;color:#000;font:normal 12px/14px 'Liberation Sans',sans-serif;white-space:pre;transform-origin:0 0;transform:scaleX(0.8964);">Работа с файлами в Турбо Паскале.doc</div>
<div style="left:8px;top:730px;width:16px;height:17px"><svg width="16" height="17" style="display:block"><path d="M3.5 1.5 H11.5 L14.5 4.5 V16.5 H3.5Z" fill="#e4eefa" stroke="#3a5aa8"/><path d="M11.5 1.5V4.5H14.5" fill="#fff" stroke="#3a5aa8"/><path d="M6 9H12M6 11H12M6 13H12" stroke="#7a9ad0"/><rect x="0.5" y="1.5" width="9" height="8" fill="#fff" stroke="#1a3aa0"/><path d="M1.5 3 L3 8.5 L5 4.5 L7 8.5 L8.5 3" fill="none" stroke="#1a3aa0" stroke-width="1.4"/></svg></div>
<div style="left:25px;top:732px;color:#000;font:normal 12px/14px 'Liberation Sans',sans-serif;white-space:pre;transform-origin:0 0;transform:scaleX(0.9394);">Текстовый редактор системы.doc</div>
<div style="left:8px;top:967px;width:388px;height:23px;background:#f0f0f0;"></div>
<div style="left:8px;top:967px;width:388px;height:1px;background:#d8d8d8;"></div>
<div style="left:9px;top:973px;width:95px;height:15px;overflow:hidden"><div style="left:0;top:0;color:#000;font:normal 12px/14px 'Liberation Sans',sans-serif;white-space:pre">Тип: Документ Microsoft Word</div></div>
<div style="left:104px;top:969px;width:1px;height:19px;background:#c8c8c8;"></div>
<div style="left:182px;top:969px;width:1px;height:19px;background:#c8c8c8;"></div>
<div style="left:109px;top:973px;color:#000;font:normal 12px/14px 'Liberation Sans',sans-serif;white-space:pre;transform-origin:0 0;transform:scaleX(0.8893);">970 КБ</div>
<div style="left:188px;top:972px;width:4px;height:13px;background:#8a8a8a;"></div>
<div style="left:192px;top:970px;width:12px;height:10px;background:#2a5ad0;box-shadow:0 0 0 1px #8a8a8a"></div>
<div style="left:194px;top:981px;width:8px;height:3px;background:#a0a0a0;"></div>
<div style="left:207px;top:973px;color:#000;font:normal 12px/14px 'Liberation Sans',sans-serif;white-space:pre;transform-origin:0 0;transform:scaleX(0.9158);">Мой компьютер</div>
<div style="left:384px;top:986px;width:2px;height:2px;background:#b0b0b0;"></div>
<div style="left:387px;top:983px;width:2px;height:2px;background:#b0b0b0;"></div>
<div style="left:390px;top:980px;width:2px;height:2px;background:#b0b0b0;"></div>
<div style="left:0px;top:994px;width:1280px;height:30px;background:linear-gradient(#3a3a3a,#2a2a2a 40%,#1e1e1e);"></div>
<div style="left:0px;top:994px;width:1280px;height:1px;background:#4a4a4a;"></div>
<div style="left:0px;top:995px;width:87px;height:29px;background:linear-gradient(#f0a060,#e06a20 45%,#c24a10 55%,#d86020);border-radius:0 14px 14px 0"></div>
<div style="left:9px;top:999px;width:18px;height:19px"><svg width="18" height="19" style="display:block"><path d="M2 2 Q5 0.5 8.5 2 L7.5 8.5 Q4 7 1 8.5Z" fill="#f0501a"/><path d="M9.5 2.2 Q13 3.5 16.5 2 L15.5 8.5 Q12 10 8.5 8.7Z" fill="#6ac02a"/><path d="M0.8 9.5 Q4 8 7.3 9.5 L6.3 16 Q3 14.5 0 16Z" fill="#2a8af0"/><path d="M8.3 9.7 Q12 11 15.3 9.5 L14.3 16 Q11 17.5 7.3 16.2Z" fill="#f8c820"/></svg></div>
<div style="left:26px;top:999px;color:#fff;font:bold 19px/22px 'Liberation Sans',sans-serif;white-space:pre;transform-origin:0 0;transform:scaleX(0.8882);font-style:italic;text-shadow:1px 1px 2px #5a2a00">пуск</div>
<div style="left:99px;top:1000px;width:17px;height:17px"><svg width="17" height="17" style="display:block"><circle cx="8.5" cy="8.5" r="7.5" fill="#f8a800" stroke="#3a2a10" stroke-width="1.5"/><path d="M5 12 L8.5 4 L12 12 M6.3 9.5H10.7" fill="none" stroke="#2a1a00" stroke-width="1.8"/></svg></div>
<div style="left:121px;top:1000px;width:18px;height:18px"><svg width="18" height="18" style="display:block"><path d="M3 9 Q9 1 15 4 L11 8 Q8 6 6 10Z" fill="#f8b020" stroke="#6a4a10" stroke-width=".8"/><path d="M15 9 Q9 17 3 14 L7 10 Q10 12 12 8Z" fill="#f8b020" stroke="#6a4a10" stroke-width=".8"/></svg></div>
<div style="left:146px;top:1001px;width:12px;height:17px"><svg width="12" height="17" style="display:block"><path d="M2 6 H5 L10 1 V16 L5 11 H2Z" fill="#b8c0c8" stroke="#6a7078" stroke-width=".8"/></svg></div>
<div style="left:173px;top:996px;color:#fff;font:bold 13px/16px 'Liberation Sans',sans-serif;white-space:pre;">»</div>
<div style="left:190px;top:999px;width:156px;height:23px;background:linear-gradient(#4a4a4a,#3a3a3a 50%,#303030);border:1px solid #151515;border-radius:3px;box-sizing:border-box;box-shadow:inset 0 1px #5a5a5a"></div>
<div style="left:199px;top:1003px;width:13px;height:16px;background:linear-gradient(90deg,#f6e29a,#e8c25a);border-radius:1px;box-shadow:inset 0 0 0 1px #c89a30"></div>
<div style="left:202px;top:1002px;width:10px;height:15px;background:linear-gradient(90deg,#fff1b8,#e6c060);box-shadow:inset 0 0 0 1px #c8a040"></div>
<div style="left:219px;top:1003px;color:#fff;font:normal 12px/14px 'Liberation Sans',sans-serif;white-space:pre;transform-origin:0 0;transform:scaleX(0.9419);">C:\Documents and Se...</div>
<div style="left:350px;top:999px;width:156px;height:23px;background:linear-gradient(#4a4a4a,#3a3a3a 50%,#303030);border:1px solid #151515;border-radius:3px;box-sizing:border-box;box-shadow:inset 0 1px #5a5a5a"></div>
<div style="left:358px;top:1002px;width:16px;height:17px"><svg width="16" height="17" style="display:block"><path d="M3.5 1.5 H11.5 L14.5 4.5 V16.5 H3.5Z" fill="#e4eefa" stroke="#3a5aa8"/><path d="M11.5 1.5V4.5H14.5" fill="#fff" stroke="#3a5aa8"/><path d="M6 9H12M6 11H12M6 13H12" stroke="#7a9ad0"/><rect x="0.5" y="1.5" width="9" height="8" fill="#fff" stroke="#1a3aa0"/><path d="M1.5 3 L3 8.5 L5 4.5 L7 8.5 L8.5 3" fill="none" stroke="#1a3aa0" stroke-width="1.4"/></svg></div>
<div style="left:379px;top:1003px;color:#fff;font:normal 12px/14px 'Liberation Sans',sans-serif;white-space:pre;transform-origin:0 0;transform:scaleX(0.9549);">Семакин_Основы пр...</div>
<div style="left:510px;top:999px;width:156px;height:23px;background:linear-gradient(#4a4a4a,#3a3a3a 50%,#303030);border:1px solid #151515;border-radius:3px;box-sizing:border-box;box-shadow:inset 0 1px #5a5a5a"></div>
<div style="left:518px;top:1002px;width:16px;height:17px"><svg width="16" height="17" style="display:block"><path d="M3.5 1.5 H11.5 L14.5 4.5 V16.5 H3.5Z" fill="#e4eefa" stroke="#3a5aa8"/><path d="M11.5 1.5V4.5H14.5" fill="#fff" stroke="#3a5aa8"/><path d="M6 9H12M6 11H12M6 13H12" stroke="#7a9ad0"/><rect x="0.5" y="1.5" width="9" height="8" fill="#fff" stroke="#1a3aa0"/><path d="M1.5 3 L3 8.5 L5 4.5 L7 8.5 L8.5 3" fill="none" stroke="#1a3aa0" stroke-width="1.4"/></svg></div>
<div style="left:539px;top:1003px;color:#fff;font:normal 12px/14px 'Liberation Sans',sans-serif;white-space:pre;transform-origin:0 0;transform:scaleX(0.9712);">Компиляция,выполн...</div>
<div style="left:670px;top:999px;width:156px;height:23px;background:linear-gradient(#4a4a4a,#3a3a3a 50%,#303030);border:1px solid #151515;border-radius:3px;box-sizing:border-box;box-shadow:inset 0 1px #5a5a5a"></div>
<div style="left:678px;top:1001px;width:17px;height:18px"><svg width="17" height="18" style="display:block"><rect x="0.5" y="0.5" width="16" height="17" rx="2" fill="#d82020" stroke="#8a1010"/><path d="M3 14 Q7 8 8 3 Q9 9 14 13 Q8 11 3 14Z" fill="none" stroke="#fff" stroke-width="1.6"/></svg></div>
<div style="left:699px;top:1003px;color:#fff;font:normal 12px/14px 'Liberation Sans',sans-serif;white-space:pre;transform-origin:0 0;transform:scaleX(0.9601);">Adobe Reader - [Сем...</div>
<div style="left:830px;top:999px;width:156px;height:23px;background:linear-gradient(#1c1c1c,#141414);border:1px solid #0a0a0a;border-radius:3px;box-sizing:border-box"></div>
<div style="left:838px;top:1003px;width:17px;height:13px;background:#000;box-shadow:0 0 0 1px #a0a0a0"></div>
<div style="left:839px;top:1004px;color:#fff;font:bold 8px/10px 'Liberation Sans',sans-serif;white-space:pre;">C:\</div>
<div style="left:859px;top:1003px;color:#fff;font:normal 12px/14px 'Liberation Sans',sans-serif;white-space:pre;transform-origin:0 0;transform:scaleX(1.0787);">bp.bat</div>
<div style="left:1064px;top:994px;width:33px;height:30px;background:linear-gradient(#3a3a3a,#222);"></div>
<div style="left:1071px;top:1001px;width:13px;height:16px;background:#b8b8b8;"></div>
<div style="left:1071px;top:1003px;color:#000;font:normal 11px/13px 'Liberation Sans',sans-serif;white-space:pre;transform-origin:0 0;transform:scaleX(0.8507);">EN</div>
<div style="left:1097px;top:994px;width:183px;height:30px;background:linear-gradient(#2a2a2a,#151515);"></div>
<div style="left:1097px;top:994px;width:1px;height:30px;background:#050505;"></div>
<div style="left:1107px;top:1001px;width:19px;height:18px"><svg width="19" height="18" style="display:block"><rect x="1" y="5" width="10" height="9" fill="#8a8a8a" stroke="#5a5a5a"/><rect x="7" y="1" width="10" height="9" fill="#b0b0b0" stroke="#6a6a6a"/><rect x="4" y="15" width="6" height="2" fill="#7a7a7a"/></svg></div>
<div style="left:1127px;top:1001px;width:16px;height:17px"><svg width="16" height="17" style="display:block"><path d="M2 12 L10 16 L15 10 L7 6Z" fill="#8a9ab8" stroke="#4a5a70" stroke-width=".8"/><path d="M3 2 L9 8 M3 2 V7 M3 2 H8" stroke="#30c030" stroke-width="2.4"/></svg></div>
<div style="left:1144px;top:1001px;width:17px;height:17px"><svg width="17" height="17" style="display:block"><rect x="0.5" y="0.5" width="16" height="16" rx="2" fill="#f08020" stroke="#b05010"/><path d="M6 4 L12 8.5 L6 13Z" fill="#3a2a10"/></svg></div>
<div style="left:1163px;top:1001px;width:16px;height:16px"><svg width="16" height="16" style="display:block"><circle cx="8" cy="8" r="6.5" fill="none" stroke="#20d020" stroke-width="2.4"/><circle cx="8" cy="8" r="2.5" fill="none" stroke="#20d020" stroke-width="2"/></svg></div>
<div style="left:1180px;top:1001px;width:16px;height:16px"><svg width="16" height="16" style="display:block"><rect x="0.5" y="1.5" width="15" height="14" fill="#fff" stroke="#333"/><rect x="0.5" y="0" width="15" height="3" fill="#303030"/><text x="1.5" y="13.5" font-family="Liberation Sans" font-weight="bold" font-size="10" fill="#000">25</text></svg></div>
<div style="left:1200px;top:1001px;width:10px;height:17px"><svg width="10" height="17" style="display:block"><rect x="0.5" y="0.5" width="9" height="16" fill="#fff" stroke="#555"/><path d="M3 8V15M5 8V15M7 8V15" stroke="#e00000"/></svg></div>
<div style="left:1215px;top:1001px;width:18px;height:16px"><svg width="18" height="16" style="display:block"><path d="M1 5 H4 L9 1 V15 L4 11 H1Z" fill="#c8d4f0" stroke="#6a7ab0" stroke-width=".8"/><path d="M11 5 Q13 8 11 11 M14 3 Q17 8 14 13" fill="none" stroke="#30c060" stroke-width="1.3"/></svg></div>
<div style="left:1239px;top:1003px;color:#fff;font:normal 12px/14px 'Liberation Sans',sans-serif;white-space:pre;transform-origin:0 0;transform:scaleX(0.8991);">17:32</div></body></html>
